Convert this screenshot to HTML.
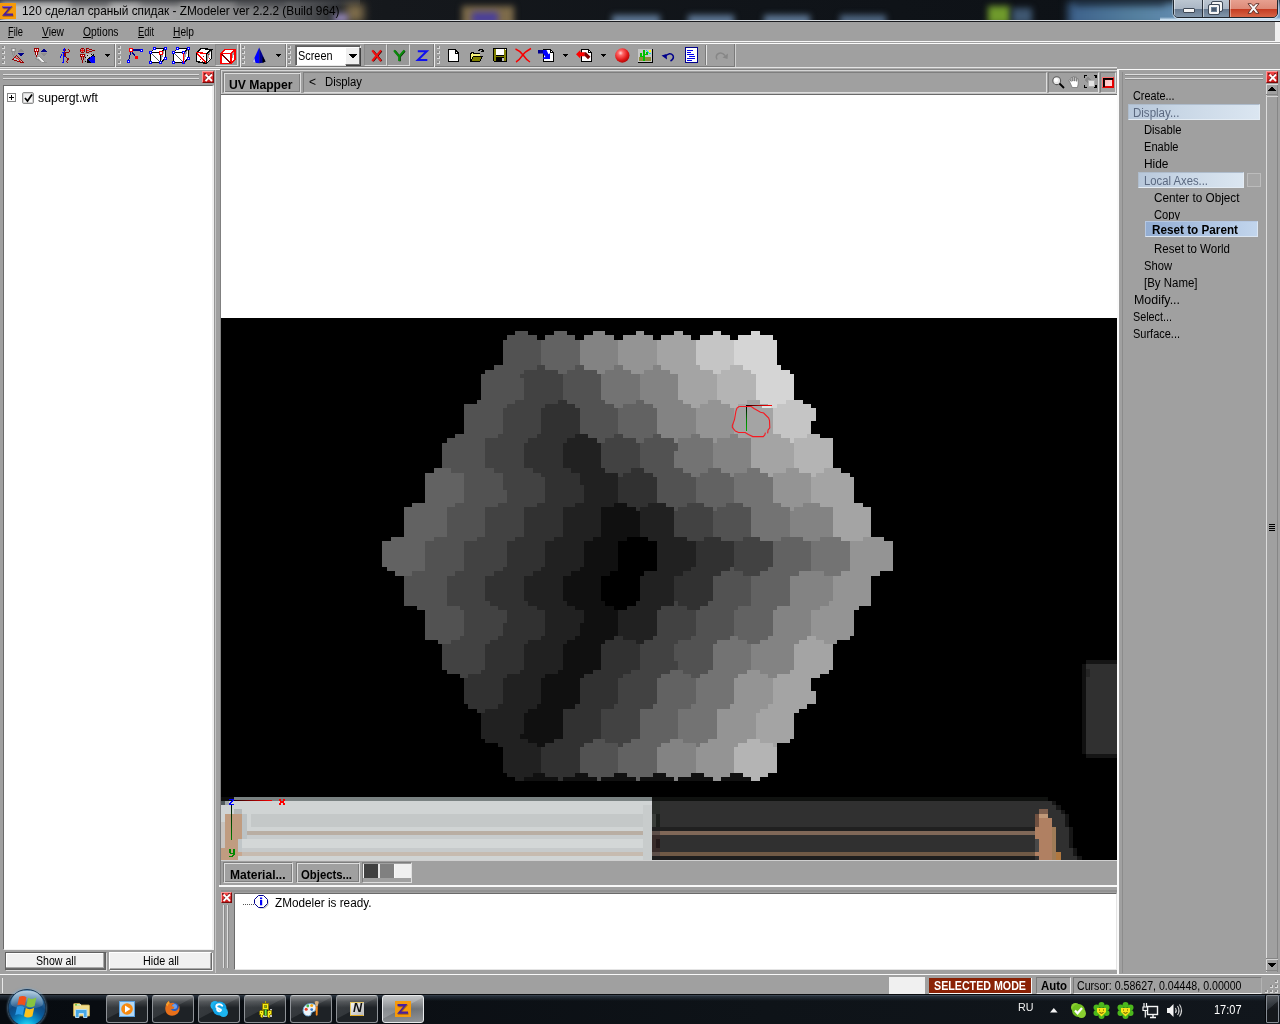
<!DOCTYPE html>
<html><head><meta charset="utf-8"><title>ZModeler</title>
<style>
*{box-sizing:border-box;margin:0;padding:0}
html,body{width:1280px;height:1024px;overflow:hidden;background:#a0a0a0;font-family:"Liberation Sans",sans-serif;font-size:12px;color:#000}
.a{position:absolute}
.t{position:absolute;white-space:nowrap;transform-origin:0 50%}
.t u{text-decoration:underline;text-underline-offset:1px}
svg{position:absolute;overflow:visible}
.sunk{border:1px solid;border-color:#6e6e6e #fff #fff #6e6e6e}
.rais{border:1px solid;border-color:#fff #6e6e6e #6e6e6e #fff}
.etch{border:1px solid;border-color:#7c7c7c #dcdcdc #dcdcdc #7c7c7c}
.w{background:#fff}.d{background:#6e6e6e}.l{background:#d8d8d8}
.dot{position:absolute;width:3px;height:3px;background:#8a8a8a;border:solid #dadada;border-width:0 1px 1px 0}
.tb{position:absolute;width:42px;height:28px;border:1px solid #8e9297;border-top-color:#c4c8cc;border-radius:3px;background:linear-gradient(180deg,rgba(255,255,255,.42) 0,rgba(255,255,255,.14) 22%,rgba(255,255,255,0) 45%),linear-gradient(152deg,#3b3f43 0,#33373b 47%,#1e2226 49%,#1e2226 100%)}
.tb.act{border-color:#e8eaec;background:linear-gradient(180deg,rgba(255,255,255,.5) 0,rgba(255,255,255,.1) 40%,rgba(255,255,255,0) 50%,rgba(255,255,255,.18) 100%),linear-gradient(152deg,#8e9296 0,#878b8f 47%,#6c7074 49%,#787c80 100%)}
</style></head><body>
<!-- ================= TITLE BAR ================= -->
<div class="a" style="left:0;top:0;width:1280px;height:22px;background:linear-gradient(90deg,#2a2d31 0,#15181c 30%,#101419 60%,#0c1015 100%);overflow:hidden">
  <!-- blurred wallpaper blobs -->
  <div class="a" style="left:0;top:-4px;width:360px;height:30px;background:linear-gradient(90deg,rgba(200,200,200,.95) 0,rgba(190,190,190,.9) 40%,rgba(150,150,152,.75) 75%,rgba(60,62,66,0) 100%);filter:blur(3px)"></div>
  <div class="a" style="left:462px;top:6px;width:52px;height:20px;background:#7d6b4a;filter:blur(3px)"></div>
  <div class="a" style="left:472px;top:12px;width:26px;height:12px;background:#4a3f9a;filter:blur(3px)"></div>
  <div class="a" style="left:612px;top:15px;width:48px;height:10px;background:#5e7896;filter:blur(3px)"></div>
  <div class="a" style="left:688px;top:15px;width:46px;height:10px;background:#5e7896;filter:blur(3px)"></div>
  <div class="a" style="left:764px;top:15px;width:46px;height:10px;background:#5e7896;filter:blur(3px)"></div>
  <div class="a" style="left:840px;top:15px;width:46px;height:10px;background:#4f6783;filter:blur(3px)"></div>
  <div class="a" style="left:988px;top:6px;width:22px;height:18px;background:#6f9a2c;filter:blur(3px)"></div>
  <div class="a" style="left:1012px;top:8px;width:20px;height:16px;background:#3e5670;filter:blur(3px)"></div>
  <div class="a" style="left:1068px;top:2px;width:230px;height:26px;background:linear-gradient(90deg,#3c608a,#55809f 30%,#6a93bb 60%,#7da2c6);filter:blur(4px)"></div>
  <div class="a" style="left:1075px;top:-2px;width:90px;height:9px;background:rgba(20,30,45,.45);filter:blur(3px)"></div>
  <div class="a" style="left:0;top:0;width:360px;height:7px;background:linear-gradient(180deg,rgba(50,52,56,.75) 0,rgba(70,72,76,.35) 45%,rgba(90,90,90,0) 100%)"></div>
  <div class="a" style="left:70px;top:-2px;width:40px;height:9px;background:rgba(60,62,66,.55);filter:blur(3px)"></div>
  <div class="a" style="left:140px;top:-2px;width:40px;height:8px;background:rgba(60,62,66,.5);filter:blur(3px)"></div>
  <div class="a" style="left:236px;top:-2px;width:50px;height:9px;background:rgba(50,52,56,.5);filter:blur(3px)"></div>
  <!-- bottom edge -->
  <div class="a" style="left:346px;top:4px;width:18px;height:18px;background:#8f7a52;filter:blur(4px);opacity:.85"></div>
  <div class="a" style="left:334px;top:14px;width:14px;height:8px;background:#9a8cc0;filter:blur(3px)"></div>
  <div class="a" style="left:0;top:20px;width:1280px;height:1px;background:#d6dade"></div>
  <div class="a" style="left:0;top:21px;width:1280px;height:1px;background:#1a1c20"></div>
  <!-- app icon -->
  <div class="a" style="left:0;top:3px;width:16px;height:16px;background:#f59a0a"></div>
  <svg style="left:0;top:3px" width="16" height="16" viewBox="0 0 16 16"><path d="M3.500 4h9.500l-6.500 7.500h7v2.300h-11l6.500-7.500h-5.500z" fill="#7a4a10" opacity=".55"/><path d="M2.500 3h10l-6.500 7.500h7v2.300h-11l6.500-7.500h-6z" fill="#4a1f9a"/><path d="M3 3.500h8.500" stroke="#8a6ad0" stroke-width=".8"/></svg>
  <span class="t" style="left:21.50px;top:3.74px;font-size:12px;line-height:14px;font-weight:normal;color:#000;transform:scaleX(0.9856)">120 сделал сраный спидак - ZModeler ver 2.2.2 (Build 964)</span>
  <!-- caption buttons -->
  <div class="a" style="left:1160px;top:17px;width:120px;height:4px;background:linear-gradient(180deg,rgba(200,225,245,.0),rgba(208,228,244,.9) 60%,rgba(220,236,248,1))"></div>
  <div class="a" style="left:1173px;top:-4px;width:105px;height:22px;border:1px solid #1e262e;border-radius:5px;box-shadow:0 1px 0 rgba(230,240,250,.75),1px 0 0 rgba(230,240,250,.5),-1px 0 0 rgba(230,240,250,.35);overflow:hidden;background:#55687d">
    <div class="a" style="left:0;top:0;width:28px;height:21px;background:linear-gradient(180deg,#c2ccd6 0,#aab6c4 55%,#66798f 58%,#8599ae 100%);box-shadow:inset 1px 0 0 rgba(255,255,255,.5)"></div>
    <div class="a" style="left:28px;top:0;width:1px;height:21px;background:#2a323c"></div>
    <div class="a" style="left:29px;top:0;width:26px;height:21px;background:linear-gradient(180deg,#c2ccd6 0,#aab6c4 55%,#66798f 58%,#8599ae 100%);box-shadow:inset 1px 0 0 rgba(255,255,255,.5)"></div>
    <div class="a" style="left:55px;top:0;width:1px;height:21px;background:#4a2018"></div>
    <div class="a" style="left:56px;top:0;width:48px;height:21px;background:linear-gradient(180deg,#eaa898 0,#dd8a78 55%,#c43c22 58%,#d9694a 100%);box-shadow:inset 1px 0 0 rgba(255,255,255,.4)"></div>
  </div>
  <div class="a" style="left:1183px;top:8px;width:12px;height:5px;background:#f4f4f4;border:1px solid #3e4856;border-radius:1px"></div>
  <div class="a" style="left:1212px;top:2px;width:10px;height:9px;border:2px solid #f4f4f4;outline:1px solid #3e4856;border-radius:1px;background:#8fa0b2"></div>
  <div class="a" style="left:1209px;top:5px;width:10px;height:9px;border:2px solid #f4f4f4;outline:1px solid #3e4856;background:#6a7e94;border-radius:1px"></div>
  <div class="a" style="left:1212px;top:8px;width:4px;height:3px;background:#48586c"></div>
  <svg style="left:1247px;top:3px" width="13" height="11" viewBox="0 0 13 11"><path d="M1 0.700h3.300L6.500 3.200 8.700 0.700H12L8.400 5.200 12 10.300H8.700L6.500 7.300 4.300 10.300H1L4.600 5.200z" fill="#f6f6f6" stroke="#5a2a22" stroke-width=".9"/></svg>
</div>
<!-- ================= MENU BAR ================= -->
<div class="a" style="left:0;top:22px;width:1280px;height:20px;background:#a0a0a0"></div>
<span class="t" style="left:8.00px;top:24.74px;font-size:12px;line-height:14px;font-weight:normal;color:#000;transform:scaleX(0.7758)"><u>F</u>ile</span>
<span class="t" style="left:42.00px;top:24.74px;font-size:12px;line-height:14px;font-weight:normal;color:#000;transform:scaleX(0.8529)"><u>V</u>iew</span>
<span class="t" style="left:83.00px;top:24.74px;font-size:12px;line-height:14px;font-weight:normal;color:#000;transform:scaleX(0.8584)"><u>O</u>ptions</span>
<span class="t" style="left:137.50px;top:24.74px;font-size:12px;line-height:14px;font-weight:normal;color:#000;transform:scaleX(0.7738)"><u>E</u>dit</span>
<span class="t" style="left:173.00px;top:24.74px;font-size:12px;line-height:14px;font-weight:normal;color:#000;transform:scaleX(0.8509)"><u>H</u>elp</span>
<div class="a" style="left:0;top:41px;width:1280px;height:1px;background:#f6f6f6"></div>
<div class="a" style="left:1275px;top:22px;width:5px;height:19px;background:#f0f0f0"></div>
<!-- ================= TOOLBAR ================= -->
<div class="a" style="left:0;top:43px;width:1280px;height:1px;background:#fafafa"></div>
<div class="a" style="left:0;top:66px;width:735px;height:1px;background:#7a7a7a"></div>
<div class="a" style="left:0;top:67px;width:1117px;height:1px;background:#e4e4e4"></div><div class="a" style="left:0;top:68px;width:1117px;height:1px;background:#aaaaaa"></div>
<!-- group separators: dark then white -->
<div class="a" style="left:114px;top:44px;width:1px;height:22px;background:#7a7a7a"></div><div class="a" style="left:115px;top:44px;width:1px;height:23px;background:#ececec"></div>
<div class="a" style="left:239px;top:44px;width:1px;height:22px;background:#7a7a7a"></div><div class="a" style="left:240px;top:44px;width:1px;height:23px;background:#ececec"></div>
<div class="a" style="left:285px;top:44px;width:1px;height:22px;background:#7a7a7a"></div><div class="a" style="left:286px;top:44px;width:1px;height:23px;background:#ececec"></div>
<div class="a" style="left:433px;top:44px;width:1px;height:22px;background:#7a7a7a"></div><div class="a" style="left:434px;top:44px;width:1px;height:23px;background:#ececec"></div>
<div class="a" style="left:734px;top:44px;width:1px;height:22px;background:#7a7a7a"></div><div class="a" style="left:735px;top:44px;width:1px;height:23px;background:#d0d0d0"></div>
<!-- grips -->
<div class="dot" style="left:2px;top:46px"></div><div class="dot" style="left:2px;top:51px"></div><div class="dot" style="left:2px;top:56px"></div><div class="dot" style="left:2px;top:61px"></div>
<div class="dot" style="left:118px;top:46px"></div><div class="dot" style="left:118px;top:51px"></div><div class="dot" style="left:118px;top:56px"></div><div class="dot" style="left:118px;top:61px"></div>
<div class="dot" style="left:242px;top:46px"></div><div class="dot" style="left:242px;top:51px"></div><div class="dot" style="left:242px;top:56px"></div><div class="dot" style="left:242px;top:61px"></div>
<div class="dot" style="left:288px;top:46px"></div><div class="dot" style="left:288px;top:51px"></div><div class="dot" style="left:288px;top:56px"></div><div class="dot" style="left:288px;top:61px"></div>
<div class="dot" style="left:437px;top:46px"></div><div class="dot" style="left:437px;top:51px"></div><div class="dot" style="left:437px;top:56px"></div><div class="dot" style="left:437px;top:61px"></div>

<!-- group 1 icons -->
<svg style="left:11px;top:48px" width="14" height="16" viewBox="0 0 14 16" shape-rendering="crispEdges"><path fill="#aec6c6" d="M3 9h2v1h-2zM2 10h4v1h-4zM3 11h4v1h-4zM6 12h3v1h-3zM5 11h3v1h-3zM9 13h2v1h-2z"/><path fill="#8e8e8e" d="M0 0h5v1h-5zM0 3h5v1h-5zM0 1h1v1h-1zM0 2h1v1h-1zM4 1h1v1h-1zM4 2h1v1h-1zM1 4h1v1h-1zM1 5h1v1h-1zM1 6h1v1h-1zM3 4h1v1h-1zM3 5h1v1h-1zM3 6h1v1h-1zM2 7h1v1h-1zM2 8h1v1h-1zM9 1h2v1h-2zM8 2h4v1h-4zM7 3h6v1h-6z"/><path fill="#f4f4f4" d="M2 1h1v1h-1zM2 2h1v1h-1z"/><path fill="#c8c8c8" d="M1 1h1v1h-1zM1 2h1v1h-1zM3 1h1v1h-1zM3 2h1v1h-1z"/><path fill="#000088" d="M7 5h6v1h-6zM8 6h4v1h-4zM9 7h2v1h-2z"/><path fill="#960000" d="M5 7h1v1h-1zM4 8h1v1h-1zM3 9h1v1h-1zM2 10h1v1h-1zM1 11h2v1h-2zM6 8h1v1h-1zM7 9h1v1h-1zM8 10h1v1h-1zM9 11h1v1h-1zM10 12h1v1h-1zM11 13h1v1h-1zM12 14h1v1h-1zM3 12h3v1h-3zM6 13h3v1h-3zM9 14h4v1h-4z"/><path fill="#ff1010" d="M4 9h1v1h-1zM5 10h1v1h-1zM6 10h1v1h-1zM7 11h1v1h-1zM8 12h1v1h-1zM9 13h1v1h-1z"/></svg>
<svg style="left:34px;top:48px" width="14" height="16" viewBox="0 0 14 16" shape-rendering="crispEdges"><path fill="#960000" d="M0 0h5v1h-5zM0 1h1v1h-1zM0 2h1v1h-1zM0 3h1v1h-1zM4 1h1v1h-1zM4 2h1v1h-1zM4 3h1v1h-1zM1 4h1v1h-1zM1 5h1v1h-1zM1 6h1v1h-1zM3 4h1v1h-1zM3 5h1v1h-1zM3 6h1v1h-1zM2 7h1v1h-1zM2 8h1v1h-1zM2 9h1v1h-1zM1 3h1v1h-1zM3 3h1v1h-1z"/><path fill="#f4f4f4" d="M1 1h1v1h-1zM1 2h1v1h-1zM3 1h1v1h-1zM3 2h1v1h-1zM2 4h1v1h-1zM2 5h1v1h-1zM2 6h1v1h-1z"/><path fill="#ff1010" d="M2 1h1v1h-1zM2 2h1v1h-1zM2 3h1v1h-1z"/><path fill="#000088" d="M9 1h2v1h-2zM8 2h4v1h-4zM7 3h6v1h-6z"/><path fill="#8e8e8e" d="M7 5h6v1h-6zM8 6h4v1h-4zM9 7h2v1h-2z"/><path fill="#909090" d="M5 8h1v1h-1zM6 9h1v1h-1zM7 10h1v1h-1zM8 11h1v1h-1zM9 12h1v1h-1zM10 13h1v1h-1zM11 14h1v1h-1zM1 10h2v1h-2zM2 11h3v1h-3zM4 12h3v1h-3zM6 13h3v1h-3zM8 14h5v1h-5zM2 9h1v1h-1z"/><path fill="#f0f0f0" d="M4 9h1v1h-1zM5 10h1v1h-1zM6 11h1v1h-1zM7 12h1v1h-1zM8 13h1v1h-1zM5 9h1v1h-1zM6 10h1v1h-1zM7 11h1v1h-1zM8 12h1v1h-1zM9 13h1v1h-1z"/><path fill="#c4c4c4" d="M3 10h1v1h-1zM4 10h1v1h-1zM5 11h1v1h-1zM6 12h1v1h-1zM7 13h1v1h-1zM3 9h1v1h-1z"/></svg>
<svg style="left:60px;top:48px" width="11" height="16" viewBox="0 0 11 16" shape-rendering="crispEdges"><path fill="#0000ff" d="M4 0h1v1h-1zM3 1h2v1h-2zM3 2h2v1h-2zM2 4h3v1h-3zM3 5h2v1h-2zM3 6h2v1h-2zM3 7h2v1h-2zM3 8h2v1h-2zM1 6h1v1h-1zM1 7h1v1h-1zM0 8h1v1h-1zM0 9h1v1h-1zM3 9h1v1h-1zM3 10h1v1h-1zM3 11h1v1h-1zM3 12h1v1h-1zM3 13h1v1h-1zM2 14h2v1h-2z"/><path fill="#960000" d="M5 1h1v1h-1zM5 2h1v1h-1zM4 3h1v1h-1zM5 4h4v1h-4zM8 1h1v1h-1zM9 2h1v1h-1zM9 3h1v1h-1zM4 5h2v1h-2zM4 6h2v1h-2zM4 7h2v1h-2zM5 8h1v1h-1zM6 9h1v1h-1zM7 10h2v1h-2zM7 11h2v1h-2zM7 12h1v1h-1zM6 13h1v1h-1zM7 14h1v1h-1z"/></svg>
<svg style="left:80px;top:48px" width="16" height="16" viewBox="0 0 16 16" shape-rendering="crispEdges"><path fill="#c4c4c4" d="M6 6h8v1h-8zM6 7h7v1h-7zM6 8h6v1h-6zM6 9h4v1h-4zM6 10h3v1h-3zM6 11h2v1h-2zM6 12h1v1h-1z"/><path fill="#960000" d="M1 0h3v1h-3zM1 4h3v1h-3zM0 1h1v1h-1zM0 2h1v1h-1zM0 3h1v1h-1zM4 1h1v1h-1zM4 2h1v1h-1zM4 3h1v1h-1zM6 0h3v1h-3zM6 4h3v1h-3zM6 1h1v1h-1zM6 2h1v1h-1zM6 3h1v1h-1zM9 1h3v1h-3zM9 3h3v1h-3zM12 2h3v1h-3zM0 6h5v1h-5zM0 7h1v1h-1zM0 8h1v1h-1zM4 7h1v1h-1zM4 8h1v1h-1zM1 9h1v1h-1zM1 10h1v1h-1zM1 11h1v1h-1zM3 9h1v1h-1zM3 10h1v1h-1zM3 11h1v1h-1zM2 12h1v1h-1zM2 13h1v1h-1zM2 14h1v1h-1zM1 8h1v1h-1zM3 8h1v1h-1z"/><path fill="#ff1010" d="M1 2h3v1h-3zM2 1h1v1h-1zM2 3h1v1h-1zM7 2h2v1h-2zM2 7h1v1h-1zM2 8h1v1h-1z"/><path fill="#f4f4f4" d="M1 7h1v1h-1zM3 7h1v1h-1z"/><path fill="#0000ff" d="M12 8h2v1h-2zM10 9h5v1h-5zM8 10h7v1h-7zM8 11h7v1h-7zM9 12h6v1h-6zM10 13h5v1h-5zM11 14h4v1h-4z"/><path fill="#000000" d="M12 7h2v1h-2zM11 8h1v1h-1zM14 8h1v1h-1zM9 9h1v1h-1zM7 7h1v1h-1zM11 6h1v1h-1zM13 6h1v1h-1zM5 9h1v1h-1zM5 13h1v1h-1zM7 11h1v1h-1zM7 12h2v1h-2zM7 13h3v1h-3zM7 14h4v1h-4zM8 10h2v1h-2z"/></svg>
<svg style="left:105px;top:54px" width="5" height="3" viewBox="0 0 5 3" shape-rendering="crispEdges"><path d="M0 0h5v1h-5zM1 1h3v1h-3zM2 2h1v1h-1z" fill="#000"/></svg>

<!-- group 2 icons -->
<svg style="left:127px;top:48px" width="17" height="16" viewBox="0 0 17 16" shape-rendering="crispEdges">
 <path d="M4 2h10M4 3L1.500 13M4 3l5 6" stroke="#00008c" fill="none" stroke-width="1.100"/>
 <rect x="2.500" y="0.500" width="3" height="3" fill="#fff" stroke="#f00"/><rect x="13" y="1" width="2" height="2" fill="#fff" stroke="#00f"/>
 <rect x="0.500" y="12.500" width="2" height="2" fill="#fff" stroke="#00f"/><rect x="8" y="8" width="3" height="3" fill="#f00"/>
</svg>
<svg style="left:150px;top:48px" width="17" height="16" viewBox="0 0 17 16" shape-rendering="crispEdges">
 <path d="M0.500 4.500h10v10h-10zM0.500 4.500l4-4h11l-5 4M15.500 0.500v10l-5 4" fill="#fff" stroke="#000" stroke-width="1.300"/><path d="M1 5l9 9" stroke="#555"/><path d="M4.500 0.500v0M15.500 10.500" stroke="#888"/>
 <g fill="#fff" stroke="#00f"><rect x="3.500" y="-0.500" width="2" height="2"/><rect x="14" y="-0.500" width="2" height="2"/><rect x="-0.500" y="3.500" width="2" height="2"/><rect x="-0.500" y="13.500" width="2" height="2"/><rect x="9.500" y="13.500" width="2" height="2"/><rect x="14" y="9.500" width="2" height="2"/></g>
 <rect x="9.500" y="3.500" width="3" height="3" fill="#fff" stroke="#f00"/>
</svg>
<svg style="left:173px;top:48px" width="17" height="16" viewBox="0 0 17 16" shape-rendering="crispEdges">
 <path d="M0.500 4.500h10v10h-10zM0.500 4.500l4-4h11l-5 4M15.500 0.500v10l-5 4" fill="#fff" stroke="#000" stroke-width="1.300"/><path d="M1 5l9 9" stroke="#555"/>
 <g fill="#fff" stroke="#00f"><rect x="3.500" y="-0.500" width="2" height="2"/><rect x="14" y="-0.500" width="2" height="2"/><rect x="-0.500" y="3.500" width="2" height="2"/><rect x="-0.500" y="13.500" width="2" height="2"/><rect x="9.500" y="13.500" width="2" height="2"/><rect x="14" y="9.500" width="2" height="2"/><rect x="9.500" y="3.500" width="2" height="2"/></g>
 <path d="M10.500 4.500v10.500" stroke="#f00" stroke-width="1.500"/>
</svg>
<svg style="left:196px;top:48px" width="17" height="16" viewBox="0 0 17 16" shape-rendering="crispEdges">
 <path d="M0.500 4.500l10 1v10l-10-2zM0.500 4.500l5-4 10 1-5 4M15.500 1.500v9l-5 5" fill="#fff" stroke="#000" stroke-width="1.300"/>
 <path d="M0.500 4.500l10 11M0.500 4.500l10 1" stroke="#f00" stroke-width="1.300"/><path d="M4 11h1M7 8h1M6 13h1M12 6h1M13 10h1" stroke="#c00"/>
</svg>
<!-- pressed button -->
<div class="a" style="left:215px;top:44px;width:23px;height:22px;background:#989898;border:1px solid;border-color:#8a8a8a #d8d8d8 #d8d8d8 #8a8a8a"></div>
<svg style="left:220px;top:49px" width="16" height="15" viewBox="0 0 16 15" shape-rendering="crispEdges">
 <path d="M1 4.500h10v10h-10zM1 4.500l4-4h10l-4 4M15 0.500v10l-4 4" fill="#fff" stroke="#f00" stroke-width="1.500"/><path d="M1.500 5l9 9" stroke="#800000" stroke-width="1.200"/>
</svg>
<!-- group 3 -->
<svg style="left:252px;top:47px" width="14" height="17" viewBox="0 0 14 17">
 <path d="M7.200 0.500L0.700 14.500q3 1.800 6.500 1.800z" fill="#0000ff"/><path d="M7.200 0.500v15.800q3.500 0 6.300-1.800z" fill="#000090"/>
 <path d="M10.500 9l3 5.500q-1.500 1-3 1.400z" fill="#000"/><path d="M0.700 14.500l1.600-3.500 1.200 4.700q-1.600-.4-2.800-1.200z" fill="#c8c8d8"/>
</svg>
<svg style="left:276px;top:54px" width="5" height="3" viewBox="0 0 5 3" shape-rendering="crispEdges"><path d="M0 0h5v1h-5zM1 1h3v1h-3zM2 2h1v1h-1z" fill="#000"/></svg>
<!-- group 4: combo + XYZ -->
<div class="a" style="left:295px;top:45px;width:66px;height:21px;background:#fff;border:1px solid;border-color:#6a6a6a #e8e8e8 #e8e8e8 #6a6a6a;box-shadow:inset 1px 1px 0 #5c5c5c"></div>
<span class="t" style="left:298.00px;top:49.24px;font-size:12px;line-height:14px;font-weight:normal;color:#000;transform:scaleX(0.9074)">Screen</span>
<div class="a" style="left:345px;top:47px;width:15px;height:18px;background:#efefef;border:1px solid;border-color:#fff #707070 #707070 #fff;box-shadow:1px 1px 0 #404040"></div>
<svg style="left:349px;top:54px" width="8" height="5" viewBox="0 0 8 5" shape-rendering="crispEdges"><path d="M0 0h8L4 4.500z" fill="#000"/></svg>
<div class="a" style="left:364px;top:44px;width:23px;height:22px;background:#989898;border:1px solid;border-color:#8a8a8a #d8d8d8 #d8d8d8 #8a8a8a"></div>
<div class="a" style="left:387px;top:44px;width:23px;height:22px;background:#989898;border:1px solid;border-color:#8a8a8a #d8d8d8 #d8d8d8 #8a8a8a"></div>
<div class="a" style="left:410px;top:44px;width:23px;height:22px;background:#989898"></div>
<svg style="left:371px;top:50px" width="12" height="12" viewBox="0 0 12 12"><path d="M2 0.800l8.500 10.400M10.500 0.800L2 11.200" stroke="#300000" stroke-width="2" fill="none"/><path d="M1.200 0.300l8.800 10.700M10 0.300L1.200 11" stroke="#f01010" stroke-width="2" fill="none"/></svg>
<svg style="left:393px;top:50px" width="13" height="12" viewBox="0 0 13 12"><path d="M1.800 0.800l5 6 5-6M6.800 6.500v4.800" stroke="#002000" stroke-width="2" fill="none"/><path d="M1 0.300l5.200 6.200 5.200-6.200M6.200 6.300v4.800" stroke="#0a8a0a" stroke-width="2.100" fill="none"/></svg>
<svg style="left:417px;top:50px" width="12" height="12" viewBox="0 0 12 12"><path d="M0.800 1.200h9l-9 8.800h9.500" stroke="#1010f0" stroke-width="2" fill="none" stroke-linejoin="miter"/></svg>
<!-- group 5 icons -->
<svg style="left:448px;top:49px" width="11" height="13" viewBox="0 0 11 13" shape-rendering="crispEdges"><path d="M0.500 0.500h6.500l3.500 3.500v8.500h-10z" fill="#fff" stroke="#000"/><path d="M7 1v3h3" fill="none" stroke="#000"/></svg>
<svg style="left:470px;top:48px" width="14" height="14" viewBox="0 0 14 14" shape-rendering="crispEdges">
 <path d="M8 2h1v-1h3v1h1v2M11 3h3" fill="none" stroke="#000"/>
 <path d="M0.500 13.500v-8h1v-1h2v1h6v2" fill="#f4f078" stroke="#000"/><path d="M1 6h9v3h-9z" fill="#f4f078"/><path d="M1 13l2.500-5h9l-2.500 5z" fill="#808000" stroke="#000"/>
</svg>
<svg style="left:493px;top:48px" width="14" height="14" viewBox="0 0 14 14" shape-rendering="crispEdges">
 <path d="M0.500 0.500h13v13h-12l-1-1z" fill="#808000" stroke="#000"/><rect x="3" y="1" width="8" height="6" fill="#fff"/><rect x="3" y="7" width="8" height="1" fill="#000"/><rect x="3" y="9" width="8" height="4.500" fill="#000"/><rect x="9" y="10" width="2" height="3" fill="#c0c0c0"/><rect x="12" y="1" width="1" height="1" fill="#fff"/>
</svg>
<svg style="left:515px;top:48px" width="17" height="15" viewBox="0 0 17 15"><path d="M0.500 1q5 2 8 6.500t6.500 6.500M16 0.500q-6 3-9 7.500t-6 6" fill="none" stroke="#f80000" stroke-width="1.400"/></svg>
<svg style="left:538px;top:48px" width="17" height="15" viewBox="0 0 17 15">
 <path d="M5.500 1.500h7l3 3v9h-10z" fill="#fff" stroke="#000" shape-rendering="crispEdges"/><path d="M12.500 1.500v3h3" fill="none" stroke="#000" shape-rendering="crispEdges"/>
 <path d="M0 2h5v3.500h-5z" fill="#000090"/><path d="M5 2h3.500l2 4.300 1.500-1v5.700h-7v-1.500l2.500-.5-2.500-3.500z" fill="#0000ff"/>
</svg>
<svg style="left:563px;top:54px" width="5" height="3" viewBox="0 0 5 3" shape-rendering="crispEdges"><path d="M0 0h5v1h-5zM1 1h3v1h-3zM2 2h1v1h-1z" fill="#000"/></svg>
<svg style="left:576px;top:48px" width="17" height="15" viewBox="0 0 17 15">
 <path d="M5.500 1.500h7l3 3v9h-10z" fill="#fff" stroke="#000" shape-rendering="crispEdges"/><path d="M12.500 1.500v3h3" fill="none" stroke="#000" shape-rendering="crispEdges"/>
 <path d="M0 6.300l4.300-4.300v2.300h4.500v4h-4.500v2.300z" fill="#ff0000"/><path d="M8.500 4.300h1.500l4.500 4.500-2.500 2.500-3.500-3.500z" fill="#800000"/>
</svg>
<svg style="left:601px;top:54px" width="5" height="3" viewBox="0 0 5 3" shape-rendering="crispEdges"><path d="M0 0h5v1h-5zM1 1h3v1h-3zM2 2h1v1h-1z" fill="#000"/></svg>
<svg style="left:615px;top:48px" width="15" height="15" viewBox="0 0 15 15"><defs><radialGradient id="rb" cx=".38" cy=".33" r=".7"><stop offset="0" stop-color="#ffd8d8"/><stop offset=".25" stop-color="#f66"/><stop offset=".7" stop-color="#e01818"/><stop offset="1" stop-color="#b00808"/></radialGradient></defs><circle cx="7.300" cy="7.500" r="7.200" fill="url(#rb)"/></svg>
<svg style="left:638px;top:49px" width="15" height="14" viewBox="0 0 15 14" shape-rendering="crispEdges">
 <rect x="0" y="0" width="14" height="13" fill="#c6c6c6"/><path d="M0 13h15v1h-15zM14 0h1v14h-1z" fill="#000"/><rect x="1" y="8" width="12" height="4" fill="#8c8c3c"/>
 <path d="M8 1h1v1h-1zM9 2h1v1h-1zM10 3h1v1h-1zM11 4h2v1h-2zM8 3h1v1h-1zM9 4h1v1h-1z" fill="#00e0e0"/><rect x="11" y="1" width="2" height="2" fill="#ff0"/>
 <path d="M5 1h2v11h-2zM2 4h2v4h-2zM2 7h3v1h-3zM8 3h2v3h-2zM7 5h2v1h-2z" fill="#00c000"/>
</svg>
<svg style="left:661px;top:52px" width="14" height="10" viewBox="0 0 14 10"><path d="M4 4.500q5-5 8-1 1.500 3-2.500 5.500" fill="none" stroke="#00008a" stroke-width="1.500"/><path d="M0.500 3.500l5 -1.500 0.500 5.500z" fill="#00008a"/></svg>
<svg style="left:685px;top:47px" width="14" height="16" viewBox="0 0 14 16" shape-rendering="crispEdges"><rect x="0.500" y="0.500" width="12" height="15" fill="#fff" stroke="#00008a"/><path d="M2 3h6v1h-6zM2 5h4v1h-4zM2 7h7v1h-7zM4 9h6v1h-6zM2 11h8v1h-8zM2 13h5v1h-5z" fill="#0000f0"/></svg>
<div class="a" style="left:705px;top:45px;width:1px;height:20px;background:#7a7a7a"></div><div class="a" style="left:706px;top:45px;width:1px;height:20px;background:#e6e6e6"></div>
<svg style="left:715px;top:52px" width="14" height="9" viewBox="0 0 14 9"><path d="M2 7.500q-2-4 1.500-6 3.500-1.500 6.500 2" fill="none" stroke="#878787" stroke-width="1.500"/><path d="M13 1.500l-0.500 5.500-5-1.500z" fill="#878787"/></svg>
<!-- ================= LEFT PANEL ================= -->
<div class="a" style="left:0;top:69px;width:220px;height:1px;background:#fcfcfc"></div>
<!-- grip lines -->
<div class="a" style="left:3px;top:74px;width:196px;height:2px;background:linear-gradient(180deg,#dedede 0 50%,#8a8a8a 50% 100%)"></div>
<div class="a" style="left:3px;top:78px;width:196px;height:2px;background:linear-gradient(180deg,#dedede 0 50%,#8a8a8a 50% 100%)"></div>
<!-- close button -->
<div class="a" style="left:202px;top:71px;width:12px;height:12px;background:linear-gradient(180deg,#f04848,#c81818);border:1px solid;border-color:#ff9a9a #7a0a0a #7a0a0a #ff9a9a"></div>
<svg style="left:203.5px;top:72.5px" width="9" height="9" viewBox="0 0 9 9"><path d="M0.500 0.500l5 5M7.500 0.500l-6.500 6.500" stroke="#000" stroke-width="1.300" stroke-dasharray="1.400 1.400"/><path d="M1.500 1.500l6.500 6.500M8 1.500l-6.500 6.500" stroke="#fff" stroke-width="1.800"/></svg>
<!-- tree list -->
<div class="a" style="left:3px;top:85px;width:211px;height:865px;background:#fff;border:1px solid;border-color:#6a6a6a #f0f0f0 #f0f0f0 #6a6a6a;border-right-width:2px"></div>
<div class="a" style="left:214px;top:70px;width:1px;height:880px;background:#969696"></div>
<div class="a" style="left:7px;top:93px;width:9px;height:9px;border:1px solid #848484;background:#fff"></div>
<div class="a" style="left:9px;top:97px;width:5px;height:1px;background:#000"></div><div class="a" style="left:11px;top:95px;width:1px;height:5px;background:#000"></div>
<div class="a" style="left:22px;top:92px;width:12px;height:12px;border:1px solid #8e8f8f;border-radius:2px;background:linear-gradient(135deg,#e8e8e8,#fff);box-shadow:inset 0 0 0 1px #d4d4d4"></div>
<svg style="left:24px;top:94px" width="9" height="9" viewBox="0 0 9 9"><path d="M1 4l2.500 3L8 0.500" fill="none" stroke="#000" stroke-width="1.700"/></svg>
<span class="t" style="left:38.00px;top:91.24px;font-size:12px;line-height:14px;font-weight:normal;color:#000;transform:scaleX(1.0223)">supergt.wft</span>
<!-- buttons -->
<div class="a" style="left:5px;top:952px;width:101px;height:18px;background:#f0f0f0;border:1px solid #606060;box-shadow:inset -1px -1px 0 #6a6a6a,inset -2px -2px 0 #a8a8a8,inset 1px 1px 0 #fff,1px 1px 0 #d8d8d8"></div>
<div class="a" style="left:109px;top:952px;width:103px;height:18px;background:#f0f0f0;border:1px solid;border-color:#fff #686868 #686868 #fff;box-shadow:inset -1px -1px 0 #a8a8a8,1px 1px 0 #f4f4f4"></div>
<span class="t" style="left:35.50px;top:954.24px;font-size:12px;line-height:14px;font-weight:normal;color:#000;transform:scaleX(0.8819)">Show all</span>
<span class="t" style="left:143.00px;top:954.24px;font-size:12px;line-height:14px;font-weight:normal;color:#000;transform:scaleX(0.8996)">Hide all</span>
<!-- splitter between left and main -->
<div class="a" style="left:215px;top:70px;width:1px;height:903px;background:#c6c6c6"></div>
<div class="a" style="left:220px;top:70px;width:1px;height:815px;background:#808080"></div>
<!-- ================= MAIN VIEW FRAME ================= -->
<div class="a" style="left:220px;top:69px;width:897px;height:1px;background:#858585"></div>
<div class="a" style="left:221px;top:70px;width:896px;height:1px;background:#d6d6d6"></div>
<div class="a" style="left:221px;top:70px;width:1px;height:24px;background:#d6d6d6"></div>
<div class="a" style="left:222px;top:93px;width:895px;height:1px;background:#c4c4c4"></div>
<!-- UV Mapper button -->
<div class="a" style="left:223px;top:72px;width:78px;height:21px;border:1px solid;border-color:#7e7e7e #dedede #dedede #7e7e7e;box-shadow:inset 1px 1px 0 #dedede,inset -1px -1px 0 #7e7e7e"></div>
<span class="t" style="left:229.00px;top:77.74px;font-size:12px;line-height:14px;font-weight:bold;color:#000;transform:scaleX(1.0131)">UV Mapper</span>
<!-- Display box -->
<div class="a" style="left:303px;top:72px;width:744px;height:21px;border:1px solid;border-color:#7e7e7e #dedede #dedede #7e7e7e"></div>
<span class="t" style="left:309.00px;top:74.74px;font-size:12px;line-height:14px;font-weight:normal;color:#000;transform:scaleX(0.9989)">&lt;</span>
<span class="t" style="left:324.50px;top:74.74px;font-size:12px;line-height:14px;font-weight:normal;color:#000;transform:scaleX(0.9404)">Display</span>
<!-- icon boxes -->
<div class="a" style="left:1048px;top:72px;width:51px;height:21px;border:1px solid;border-color:#7e7e7e #dedede #dedede #7e7e7e"></div>
<div class="a" style="left:1100px;top:72px;width:16px;height:21px;border:1px solid;border-color:#7e7e7e #dedede #dedede #7e7e7e"></div>
<!-- magnifier -->
<svg style="left:1052px;top:76px" width="13" height="13" viewBox="0 0 13 13"><circle cx="4.700" cy="4.700" r="3.900" fill="#e8e8e8" stroke="#5a5a5a" stroke-width="1.100"/><circle cx="4" cy="4" r="2" fill="#fff"/><path d="M7.500 7.500l4.500 4.500" stroke="#000" stroke-width="1.800"/></svg>
<!-- hand -->
<svg style="left:1068px;top:76px" width="12" height="12" viewBox="0 0 12 12"><path d="M2 6.500L0.800 4.500 2 3.800 3.200 5.500V1.500h1.400V5h.5V.6h1.400V5h.5V1.200h1.400V5.200h.5V2.800h1.300V8L9.400 11.500H4.200z" fill="#fff" stroke="#6a6a6a" stroke-width=".7"/></svg>
<!-- zoom-to-selection -->
<svg style="left:1084px;top:75px" width="13" height="13" viewBox="0 0 13 13" shape-rendering="crispEdges"><path d="M0.500 3V0.500H3M9.500 0.500H12v2.500M12 10v2.500H9.500M3 12.500H0.500V10" fill="none" stroke="#000" stroke-width="1.300"/><circle cx="4" cy="5" r="2.600" fill="#8a8a8a"/><rect x="4.500" y="5.500" width="6" height="5.500" fill="#e4e4e4" stroke="#b0b0b0"/></svg>
<!-- red square -->
<div class="a" style="left:1102px;top:77px;width:12px;height:11px;border:1px solid;border-color:#ff7070 #e00000 #e00000 #ff7070;background:linear-gradient(135deg,#ffb0b0,#ffe4e4);box-shadow:inset 1px 1px 0 #000,inset 2px 2px 0 #200000,inset -1px -1px 0 #e80000"></div>
<!-- viewport -->
<div class="a" style="left:221px;top:94px;width:896px;height:1px;background:#6a6a6a"></div>
<div class="a" style="left:221px;top:95px;width:896px;height:223px;background:#fff"></div>
<div class="a" style="left:221px;top:318px;width:896px;height:542px;background:#000"></div>
<!-- hex texture -->
<svg style="left:0;top:0" width="1280" height="1024" viewBox="0 0 1280 1024" shape-rendering="crispEdges">
<path fill="#101010" d="M614 503h13v4h-13zM601 507h35v4h-35zM601 511h39v4h-39zM601 515h39v5h-39zM601 520h39v4h-39zM601 524h39v4h-39zM601 528h39v5h-39zM601 533h39v4h-39zM593 537h34v4h-34zM584 541h34v5h-34zM584 546h34v4h-34zM584 550h34v4h-34zM584 554h34v4h-34zM584 558h34v5h-34zM584 563h34v4h-34zM580 567h38v4h-38zM571 571h39v5h-39zM563 576h38v4h-38zM563 580h38v4h-38zM563 584h38v4h-38zM563 588h38v5h-38zM563 593h38v4h-38zM563 597h38v4h-38zM567 601h38v5h-38zM575 606h39v4h-39zM584 610h34v4h-34zM584 614h34v4h-34zM584 618h34v5h-34zM580 623h38v4h-38zM580 627h38v4h-38zM580 631h38v5h-38zM575 636h39v4h-39zM567 640h38v4h-38zM563 644h38v4h-38zM563 648h38v5h-38zM563 653h38v4h-38zM563 657h38v4h-38zM563 661h38v5h-38zM563 666h38v4h-38zM558 670h35v4h-35zM545 674h39v4h-39zM541 678h39v5h-39zM541 683h39v4h-39zM541 687h39v4h-39zM541 691h39v5h-39zM541 696h39v4h-39zM541 700h39v4h-39zM537 704h38v5h-38zM528 709h35v4h-35zM524 713h39v4h-39zM524 717h39v4h-39zM524 721h39v5h-39zM524 726h39v4h-39zM524 730h39v4h-39zM520 734h43v5h-43zM528 739h26v4h-26zM537 743h8v4h-8zM533 773h12v4h-12zM575 773h13v4h-13zM614 773h13v4h-13zM653 773h13v4h-13zM691 773h13v4h-13zM730 773h13v4h-13zM524 777h34v4h-34zM563 777h34v4h-34zM601 777h35v4h-35zM640 777h34v4h-34zM678 777h35v4h-35zM721 777h30v4h-30z"/>
<path fill="#212121" d="M575 434h13v4h-13zM567 438h30v5h-30zM563 443h38v4h-38zM563 447h38v4h-38zM563 451h38v4h-38zM563 455h38v5h-38zM563 460h38v4h-38zM563 464h38v4h-38zM571 468h34v5h-34zM580 473h38v4h-38zM580 477h38v4h-38zM580 481h38v4h-38zM584 485h34v5h-34zM584 490h34v4h-34zM584 494h34v4h-34zM584 498h34v5h-34zM575 503h39v4h-39zM648 503h18v4h-18zM563 507h38v4h-38zM640 507h34v4h-34zM563 511h38v4h-38zM640 511h34v4h-34zM563 515h38v5h-38zM640 515h34v5h-34zM563 520h38v4h-38zM640 520h34v4h-34zM563 524h38v4h-38zM640 524h34v4h-34zM563 528h38v5h-38zM640 528h34v5h-34zM563 533h38v4h-38zM640 533h34v4h-34zM554 537h39v4h-39zM648 537h39v4h-39zM545 541h39v5h-39zM657 541h39v5h-39zM545 546h39v4h-39zM657 546h39v4h-39zM545 550h39v4h-39zM657 550h39v4h-39zM545 554h39v4h-39zM657 554h39v4h-39zM545 558h39v5h-39zM657 558h39v5h-39zM545 563h39v4h-39zM657 563h39v4h-39zM541 567h39v4h-39zM657 567h34v4h-34zM533 571h38v5h-38zM644 571h39v5h-39zM524 576h39v4h-39zM640 576h34v4h-34zM524 580h39v4h-39zM640 580h34v4h-34zM524 584h39v4h-39zM640 584h34v4h-34zM524 588h39v5h-39zM640 588h34v5h-34zM524 593h39v4h-39zM640 593h34v4h-34zM524 597h39v4h-39zM640 597h34v4h-34zM528 601h39v5h-39zM636 601h38v5h-38zM537 606h38v4h-38zM627 606h34v4h-34zM545 610h39v4h-39zM618 610h39v4h-39zM545 614h39v4h-39zM618 614h39v4h-39zM545 618h39v5h-39zM618 618h39v5h-39zM545 623h35v4h-35zM618 623h39v4h-39zM545 627h35v4h-35zM618 627h39v4h-39zM545 631h35v5h-35zM618 631h39v5h-39zM541 636h34v4h-34zM623 636h30v4h-30zM528 640h39v4h-39zM636 640h8v4h-8zM524 644h39v4h-39zM524 648h39v5h-39zM524 653h39v4h-39zM524 657h39v4h-39zM524 661h39v5h-39zM524 666h39v4h-39zM520 670h38v4h-38zM507 674h38v4h-38zM503 678h38v5h-38zM503 683h38v4h-38zM503 687h38v4h-38zM503 691h38v5h-38zM503 696h38v4h-38zM503 700h38v4h-38zM498 704h39v5h-39zM485 709h43v4h-43zM481 713h43v4h-43zM481 717h43v4h-43zM481 721h43v5h-43zM481 726h43v4h-43zM481 730h43v4h-43zM481 734h39v5h-39zM485 739h43v4h-43zM498 743h39v4h-39zM503 747h38v4h-38zM503 751h38v5h-38zM503 756h38v4h-38zM503 760h38v4h-38zM503 764h38v5h-38zM503 769h38v4h-38zM507 773h26v4h-26zM515 777h9v4h-9z"/>
<path fill="#313131" d="M558 400h9v4h-9zM545 404h30v4h-30zM541 408h39v5h-39zM541 413h39v4h-39zM541 417h39v4h-39zM541 421h39v4h-39zM541 425h39v5h-39zM541 430h39v4h-39zM537 434h38v4h-38zM528 438h39v5h-39zM524 443h39v4h-39zM524 447h39v4h-39zM524 451h39v4h-39zM524 455h39v5h-39zM524 460h39v4h-39zM524 464h39v4h-39zM533 468h38v5h-38zM631 468h13v5h-13zM541 473h39v4h-39zM623 473h30v4h-30zM545 477h35v4h-35zM618 477h39v4h-39zM545 481h35v4h-35zM618 481h39v4h-39zM545 485h39v5h-39zM618 485h39v5h-39zM545 490h39v4h-39zM618 490h39v4h-39zM545 494h39v4h-39zM618 494h39v4h-39zM545 498h39v5h-39zM618 498h39v5h-39zM537 503h38v4h-38zM627 503h21v4h-21zM524 507h39v4h-39zM636 507h4v4h-4zM524 511h39v4h-39zM524 515h39v5h-39zM524 520h39v4h-39zM524 524h39v4h-39zM524 528h39v5h-39zM524 533h39v4h-39zM515 537h39v4h-39zM704 537h17v4h-17zM507 541h38v5h-38zM696 541h38v5h-38zM507 546h38v4h-38zM696 546h38v4h-38zM507 550h38v4h-38zM696 550h38v4h-38zM507 554h38v4h-38zM696 554h38v4h-38zM507 558h38v5h-38zM696 558h38v5h-38zM507 563h38v4h-38zM696 563h38v4h-38zM503 567h38v4h-38zM691 567h39v4h-39zM494 571h39v5h-39zM683 571h38v5h-38zM485 576h39v4h-39zM674 576h39v4h-39zM485 580h39v4h-39zM674 580h39v4h-39zM485 584h39v4h-39zM674 584h39v4h-39zM485 588h39v5h-39zM674 588h39v5h-39zM485 593h39v4h-39zM674 593h39v4h-39zM485 597h39v4h-39zM674 597h39v4h-39zM490 601h38v5h-38zM678 601h30v5h-30zM498 606h39v4h-39zM687 606h13v4h-13zM507 610h38v4h-38zM507 614h38v4h-38zM507 618h38v5h-38zM503 623h42v4h-42zM503 627h42v4h-42zM503 631h42v5h-42zM498 636h43v4h-43zM614 636h9v4h-9zM490 640h38v4h-38zM605 640h31v4h-31zM485 644h39v4h-39zM601 644h39v4h-39zM485 648h39v5h-39zM601 648h39v5h-39zM485 653h39v4h-39zM601 653h39v4h-39zM485 657h39v4h-39zM601 657h39v4h-39zM485 661h39v5h-39zM601 661h39v5h-39zM485 666h39v4h-39zM601 666h39v4h-39zM481 670h39v4h-39zM593 670h38v4h-38zM468 674h39v4h-39zM584 674h39v4h-39zM464 678h39v5h-39zM580 678h38v5h-38zM464 683h39v4h-39zM580 683h38v4h-38zM464 687h39v4h-39zM580 687h38v4h-38zM464 691h39v5h-39zM580 691h38v5h-38zM464 696h39v4h-39zM580 696h38v4h-38zM464 700h39v4h-39zM580 700h38v4h-38zM468 704h30v5h-30zM575 704h39v5h-39zM477 709h8v4h-8zM563 709h38v4h-38zM563 713h38v4h-38zM563 717h38v4h-38zM563 721h38v5h-38zM563 726h38v4h-38zM563 730h38v4h-38zM563 734h38v5h-38zM554 739h39v4h-39zM545 743h39v4h-39zM541 747h39v4h-39zM541 751h39v5h-39zM541 756h39v4h-39zM541 760h39v4h-39zM541 764h39v5h-39zM541 769h39v4h-39zM545 773h30v4h-30zM558 777h5v4h-5z"/>
<path fill="#424242" d="M537 365h8v5h-8zM524 370h34v4h-34zM520 374h43v4h-43zM524 378h39v4h-39zM524 382h39v5h-39zM524 387h39v4h-39zM524 391h39v4h-39zM524 395h39v5h-39zM515 400h43v4h-43zM507 404h38v4h-38zM503 408h38v5h-38zM503 413h38v4h-38zM503 417h38v4h-38zM503 421h38v4h-38zM503 425h38v5h-38zM503 430h38v4h-38zM498 434h39v4h-39zM614 434h9v4h-9zM485 438h43v5h-43zM605 438h31v5h-31zM485 443h39v4h-39zM601 443h39v4h-39zM485 447h39v4h-39zM601 447h39v4h-39zM485 451h39v4h-39zM601 451h39v4h-39zM485 455h39v5h-39zM601 455h39v5h-39zM485 460h39v4h-39zM601 460h39v4h-39zM485 464h39v4h-39zM601 464h39v4h-39zM494 468h39v5h-39zM605 468h26v5h-26zM503 473h38v4h-38zM618 473h5v4h-5zM503 477h42v4h-42zM503 481h42v4h-42zM503 485h42v5h-42zM507 490h38v4h-38zM507 494h38v4h-38zM507 498h38v5h-38zM498 503h39v4h-39zM687 503h17v4h-17zM485 507h39v4h-39zM678 507h35v4h-35zM485 511h39v4h-39zM674 511h39v4h-39zM485 515h39v5h-39zM674 515h39v5h-39zM485 520h39v4h-39zM674 520h39v4h-39zM485 524h39v4h-39zM674 524h39v4h-39zM485 528h39v5h-39zM674 528h39v5h-39zM485 533h39v4h-39zM674 533h39v4h-39zM477 537h38v4h-38zM687 537h17v4h-17zM743 537h17v4h-17zM464 541h43v5h-43zM734 541h39v5h-39zM464 546h43v4h-43zM734 546h39v4h-39zM464 550h43v4h-43zM734 550h39v4h-39zM464 554h43v4h-43zM734 554h39v4h-39zM464 558h43v5h-43zM734 558h39v5h-39zM464 563h43v4h-43zM734 563h39v4h-39zM464 567h39v4h-39zM734 567h34v4h-34zM455 571h39v5h-39zM743 571h17v5h-17zM447 576h38v4h-38zM447 580h38v4h-38zM447 584h38v4h-38zM447 588h38v5h-38zM447 593h38v4h-38zM447 597h38v4h-38zM447 601h43v5h-43zM674 601h4v5h-4zM460 606h38v4h-38zM661 606h26v4h-26zM464 610h43v4h-43zM657 610h39v4h-39zM464 614h43v4h-43zM657 614h39v4h-39zM464 618h43v5h-43zM657 618h39v5h-39zM464 623h39v4h-39zM657 623h39v4h-39zM464 627h39v4h-39zM657 627h39v4h-39zM464 631h39v5h-39zM657 631h39v5h-39zM460 636h38v4h-38zM653 636h38v4h-38zM451 640h39v4h-39zM644 640h34v4h-34zM442 644h43v4h-43zM640 644h34v4h-34zM442 648h43v5h-43zM640 648h34v5h-34zM442 653h43v4h-43zM640 653h34v4h-34zM442 657h43v4h-43zM640 657h34v4h-34zM442 661h43v5h-43zM640 661h38v5h-38zM442 666h43v4h-43zM640 666h38v4h-38zM447 670h34v4h-34zM631 670h39v4h-39zM460 674h8v4h-8zM623 674h38v4h-38zM618 678h39v5h-39zM618 683h39v4h-39zM618 687h39v4h-39zM618 691h39v5h-39zM618 696h39v4h-39zM618 700h39v4h-39zM614 704h39v5h-39zM601 709h39v4h-39zM601 713h39v4h-39zM601 717h39v4h-39zM601 721h39v5h-39zM601 726h39v4h-39zM601 730h39v4h-39zM601 734h39v5h-39zM605 739h26v4h-26zM618 743h5v4h-5z"/>
<path fill="#525252" d="M515 331h13v4h-13zM507 335h30v5h-30zM503 340h38v4h-38zM503 344h38v4h-38zM503 348h38v4h-38zM503 352h38v5h-38zM503 357h38v4h-38zM503 361h38v4h-38zM494 365h43v5h-43zM575 365h9v5h-9zM485 370h39v4h-39zM567 370h30v4h-30zM481 374h39v4h-39zM563 374h38v4h-38zM481 378h43v4h-43zM563 378h38v4h-38zM481 382h43v5h-43zM563 382h38v5h-38zM481 387h43v4h-43zM563 387h38v4h-38zM481 391h43v4h-43zM563 391h38v4h-38zM481 395h43v5h-43zM563 395h38v5h-38zM477 400h38v4h-38zM567 400h38v4h-38zM464 404h43v4h-43zM575 404h39v4h-39zM464 408h39v5h-39zM580 408h38v5h-38zM464 413h39v4h-39zM580 413h38v4h-38zM464 417h39v4h-39zM580 417h38v4h-38zM464 421h39v4h-39zM580 421h38v4h-38zM464 425h39v5h-39zM580 425h38v5h-38zM464 430h39v4h-39zM580 430h38v4h-38zM455 434h43v4h-43zM588 434h26v4h-26zM653 434h8v4h-8zM447 438h38v5h-38zM597 438h8v5h-8zM644 438h30v5h-30zM442 443h43v4h-43zM640 443h38v4h-38zM442 447h43v4h-43zM640 447h38v4h-38zM442 451h43v4h-43zM640 451h34v4h-34zM442 455h43v5h-43zM640 455h34v5h-34zM442 460h43v4h-43zM640 460h34v4h-34zM442 464h43v4h-43zM640 464h34v4h-34zM451 468h43v5h-43zM644 468h39v5h-39zM464 473h39v4h-39zM653 473h38v4h-38zM464 477h39v4h-39zM657 477h39v4h-39zM464 481h39v4h-39zM657 481h39v4h-39zM464 485h39v5h-39zM657 485h39v5h-39zM464 490h43v4h-43zM657 490h39v4h-39zM464 494h43v4h-43zM657 494h39v4h-39zM464 498h43v5h-43zM657 498h39v5h-39zM455 503h43v4h-43zM666 503h21v4h-21zM726 503h17v4h-17zM447 507h38v4h-38zM674 507h4v4h-4zM717 507h34v4h-34zM447 511h38v4h-38zM713 511h38v4h-38zM447 515h38v5h-38zM713 515h38v5h-38zM447 520h38v4h-38zM713 520h38v4h-38zM447 524h38v4h-38zM713 524h38v4h-38zM447 528h38v5h-38zM713 528h38v5h-38zM447 533h38v4h-38zM713 533h38v4h-38zM434 537h43v4h-43zM721 537h22v4h-22zM425 541h39v5h-39zM425 546h39v4h-39zM425 550h39v4h-39zM425 554h39v4h-39zM425 558h39v5h-39zM425 563h39v4h-39zM425 567h39v4h-39zM730 567h4v4h-4zM412 571h43v5h-43zM721 571h22v5h-22zM404 576h43v4h-43zM713 576h38v4h-38zM404 580h43v4h-43zM713 580h38v4h-38zM404 584h43v4h-43zM713 584h38v4h-38zM404 588h43v5h-43zM713 588h38v5h-38zM404 593h43v4h-43zM713 593h38v4h-38zM404 597h43v4h-43zM713 597h38v4h-38zM404 601h43v5h-43zM708 601h43v5h-43zM417 606h43v4h-43zM700 606h38v4h-38zM425 610h39v4h-39zM696 610h38v4h-38zM425 614h39v4h-39zM696 614h38v4h-38zM425 618h39v5h-39zM696 618h38v5h-38zM425 623h39v4h-39zM696 623h38v4h-38zM425 627h39v4h-39zM696 627h38v4h-38zM425 631h39v5h-39zM696 631h38v5h-38zM425 636h35v4h-35zM691 636h39v4h-39zM438 640h13v4h-13zM678 640h39v4h-39zM674 644h39v4h-39zM674 648h39v5h-39zM674 653h39v4h-39zM674 657h39v4h-39zM678 661h35v5h-35zM678 666h35v4h-35zM683 670h25v4h-25zM691 674h9v4h-9zM593 739h12v4h-12zM584 743h34v4h-34zM580 747h38v4h-38zM580 751h38v5h-38zM580 756h38v4h-38zM580 760h38v4h-38zM580 764h38v5h-38zM580 769h38v4h-38zM588 773h26v4h-26zM597 777h4v4h-4z"/>
<path fill="#626262" d="M554 331h13v4h-13zM545 335h30v5h-30zM541 340h39v4h-39zM541 344h39v4h-39zM541 348h39v4h-39zM541 352h39v5h-39zM541 357h39v4h-39zM541 361h39v4h-39zM545 365h30v5h-30zM558 370h9v4h-9zM636 400h8v4h-8zM623 404h30v4h-30zM618 408h39v5h-39zM618 413h39v4h-39zM618 417h39v4h-39zM618 421h39v4h-39zM618 425h39v5h-39zM618 430h39v4h-39zM623 434h30v4h-30zM636 438h8v5h-8zM434 468h17v5h-17zM708 468h13v5h-13zM425 473h39v4h-39zM700 473h30v4h-30zM425 477h39v4h-39zM696 477h38v4h-38zM425 481h39v4h-39zM696 481h38v4h-38zM425 485h39v5h-39zM696 485h38v5h-38zM425 490h39v4h-39zM696 490h38v4h-38zM425 494h39v4h-39zM696 494h38v4h-38zM425 498h39v5h-39zM696 498h38v5h-38zM412 503h43v4h-43zM704 503h22v4h-22zM404 507h43v4h-43zM713 507h4v4h-4zM404 511h43v4h-43zM404 515h43v5h-43zM404 520h43v4h-43zM404 524h43v4h-43zM404 528h43v5h-43zM404 533h43v4h-43zM391 537h43v4h-43zM781 537h22v4h-22zM382 541h43v5h-43zM773 541h38v5h-38zM382 546h43v4h-43zM773 546h38v4h-38zM382 550h43v4h-43zM773 550h38v4h-38zM382 554h43v4h-43zM773 554h38v4h-38zM382 558h43v5h-43zM773 558h38v5h-38zM382 563h43v4h-43zM773 563h38v4h-38zM387 567h38v4h-38zM768 567h43v4h-43zM395 571h17v5h-17zM760 571h39v5h-39zM751 576h39v4h-39zM751 580h39v4h-39zM751 584h39v4h-39zM751 588h39v5h-39zM751 593h39v4h-39zM751 597h39v4h-39zM751 601h39v5h-39zM738 606h39v4h-39zM734 610h39v4h-39zM734 614h39v4h-39zM734 618h39v5h-39zM734 623h39v4h-39zM734 627h39v4h-39zM734 631h39v5h-39zM738 636h30v4h-30zM747 640h13v4h-13zM670 670h13v4h-13zM661 674h30v4h-30zM657 678h39v5h-39zM657 683h39v4h-39zM657 687h39v4h-39zM657 691h39v5h-39zM657 696h39v4h-39zM657 700h39v4h-39zM653 704h38v5h-38zM640 709h38v4h-38zM640 713h38v4h-38zM640 717h38v4h-38zM640 721h38v5h-38zM640 726h38v4h-38zM640 730h38v4h-38zM640 734h38v5h-38zM631 739h39v4h-39zM623 743h38v4h-38zM618 747h39v4h-39zM618 751h39v5h-39zM618 756h39v4h-39zM618 760h39v4h-39zM618 764h39v5h-39zM618 769h39v4h-39zM627 773h26v4h-26zM636 777h4v4h-4z"/>
<path fill="#737373" d="M614 365h9v5h-9zM605 370h26v4h-26zM601 374h39v4h-39zM601 378h39v4h-39zM601 382h39v5h-39zM601 387h39v4h-39zM601 391h39v4h-39zM601 395h39v5h-39zM605 400h31v4h-31zM614 404h9v4h-9zM691 434h9v4h-9zM678 438h35v5h-35zM678 443h35v4h-35zM678 447h35v4h-35zM674 451h39v4h-39zM674 455h39v5h-39zM674 460h39v4h-39zM674 464h39v4h-39zM683 468h25v5h-25zM747 468h13v5h-13zM691 473h9v4h-9zM734 473h34v4h-34zM734 477h39v4h-39zM734 481h39v4h-39zM734 485h39v5h-39zM734 490h39v4h-39zM734 494h39v4h-39zM734 498h39v5h-39zM743 503h38v4h-38zM751 507h39v4h-39zM751 511h39v4h-39zM751 515h39v5h-39zM751 520h39v4h-39zM751 524h39v4h-39zM751 528h39v5h-39zM751 533h39v4h-39zM760 537h21v4h-21zM820 537h21v4h-21zM811 541h39v5h-39zM811 546h39v4h-39zM811 550h39v4h-39zM811 554h39v4h-39zM811 558h39v5h-39zM811 563h39v4h-39zM811 567h39v4h-39zM824 571h17v5h-17zM730 636h8v4h-8zM717 640h30v4h-30zM713 644h38v4h-38zM713 648h38v5h-38zM713 653h38v4h-38zM713 657h38v4h-38zM713 661h38v5h-38zM713 666h38v4h-38zM708 670h39v4h-39zM700 674h38v4h-38zM696 678h38v5h-38zM696 683h38v4h-38zM696 687h38v4h-38zM696 691h38v5h-38zM696 696h38v4h-38zM696 700h38v4h-38zM691 704h39v5h-39zM678 709h39v4h-39zM678 713h39v4h-39zM678 717h39v4h-39zM678 721h39v5h-39zM678 726h39v4h-39zM678 730h39v4h-39zM678 734h39v5h-39zM683 739h25v4h-25zM696 743h4v4h-4z"/>
<path fill="#838383" d="M593 331h12v4h-12zM584 335h30v5h-30zM580 340h38v4h-38zM580 344h38v4h-38zM580 348h38v4h-38zM580 352h38v5h-38zM580 357h38v4h-38zM580 361h38v4h-38zM584 365h30v5h-30zM653 365h8v5h-8zM597 370h8v4h-8zM644 370h26v4h-26zM640 374h38v4h-38zM640 378h38v4h-38zM640 382h38v5h-38zM640 387h38v4h-38zM640 391h38v4h-38zM640 395h38v5h-38zM644 400h39v4h-39zM653 404h38v4h-38zM657 408h39v5h-39zM657 413h39v4h-39zM657 417h39v4h-39zM657 421h39v4h-39zM657 425h39v5h-39zM657 430h39v4h-39zM661 434h30v4h-30zM730 434h8v4h-8zM674 438h4v5h-4zM717 438h34v5h-34zM713 443h38v4h-38zM713 447h38v4h-38zM713 451h38v4h-38zM713 455h38v5h-38zM713 460h38v4h-38zM713 464h38v4h-38zM721 468h26v5h-26zM730 473h4v4h-4zM803 503h17v4h-17zM794 507h39v4h-39zM790 511h43v4h-43zM790 515h43v5h-43zM790 520h43v4h-43zM790 524h43v4h-43zM790 528h43v5h-43zM790 533h43v4h-43zM803 537h17v4h-17zM799 571h25v5h-25zM790 576h43v4h-43zM790 580h43v4h-43zM790 584h43v4h-43zM790 588h43v5h-43zM790 593h43v4h-43zM790 597h43v4h-43zM790 601h39v5h-39zM777 606h43v4h-43zM773 610h38v4h-38zM773 614h38v4h-38zM773 618h38v5h-38zM773 623h38v4h-38zM773 627h38v4h-38zM773 631h38v5h-38zM768 636h39v4h-39zM760 640h39v4h-39zM751 644h43v4h-43zM751 648h43v5h-43zM751 653h43v4h-43zM751 657h43v4h-43zM751 661h43v5h-43zM751 666h43v4h-43zM760 670h30v4h-30zM768 674h9v4h-9zM670 739h13v4h-13zM661 743h35v4h-35zM657 747h39v4h-39zM657 751h39v5h-39zM657 756h39v4h-39zM657 760h39v4h-39zM657 764h39v5h-39zM657 769h39v4h-39zM666 773h25v4h-25zM674 777h4v4h-4z"/>
<path fill="#949494" d="M636 331h8v4h-8zM623 335h30v5h-30zM618 340h39v4h-39zM618 344h39v4h-39zM618 348h39v4h-39zM618 352h39v5h-39zM618 357h39v4h-39zM618 361h39v4h-39zM623 365h30v5h-30zM631 370h13v4h-13zM708 400h13v4h-13zM700 404h30v4h-30zM696 408h38v5h-38zM696 413h38v4h-38zM696 417h38v4h-38zM696 421h38v4h-38zM696 425h38v5h-38zM696 430h38v4h-38zM700 434h30v4h-30zM713 438h4v5h-4zM786 468h13v5h-13zM773 473h38v4h-38zM773 477h38v4h-38zM773 481h38v4h-38zM773 485h38v5h-38zM773 490h38v4h-38zM773 494h38v4h-38zM773 498h38v5h-38zM781 503h22v4h-22zM790 507h4v4h-4zM863 537h21v4h-21zM850 541h43v5h-43zM850 546h43v4h-43zM850 550h43v4h-43zM850 554h43v4h-43zM850 558h43v5h-43zM850 563h43v4h-43zM850 567h43v4h-43zM841 571h39v5h-39zM833 576h38v4h-38zM833 580h38v4h-38zM833 584h38v4h-38zM833 588h38v5h-38zM833 593h38v4h-38zM833 597h38v4h-38zM829 601h42v5h-42zM820 606h39v4h-39zM811 610h43v4h-43zM811 614h43v4h-43zM811 618h43v5h-43zM811 623h43v4h-43zM811 627h43v4h-43zM811 631h43v5h-43zM816 636h34v4h-34zM824 640h13v4h-13zM747 670h13v4h-13zM738 674h30v4h-30zM734 678h39v5h-39zM734 683h39v4h-39zM734 687h39v4h-39zM734 691h39v5h-39zM734 696h39v4h-39zM734 700h39v4h-39zM730 704h38v5h-38zM717 709h43v4h-43zM717 713h39v4h-39zM717 717h39v4h-39zM717 721h39v5h-39zM717 726h39v4h-39zM717 730h39v4h-39zM717 734h39v5h-39zM708 739h39v4h-39zM700 743h38v4h-38zM696 747h38v4h-38zM696 751h38v5h-38zM696 756h38v4h-38zM696 760h38v4h-38zM696 764h38v5h-38zM696 769h38v4h-38zM704 773h26v4h-26zM713 777h8v4h-8z"/>
<path fill="#a4a4a4" d="M674 331h9v4h-9zM661 335h30v5h-30zM657 340h39v4h-39zM657 344h39v4h-39zM657 348h39v4h-39zM657 352h39v5h-39zM657 357h39v4h-39zM657 361h39v4h-39zM661 365h39v5h-39zM670 370h43v4h-43zM678 374h39v4h-39zM678 378h39v4h-39zM678 382h39v5h-39zM678 387h39v4h-39zM678 391h39v4h-39zM678 395h39v5h-39zM683 400h25v4h-25zM747 400h13v4h-13zM691 404h9v4h-9zM738 404h30v4h-30zM734 408h39v5h-39zM734 413h39v4h-39zM734 417h39v4h-39zM734 421h39v4h-39zM734 425h39v5h-39zM734 430h39v4h-39zM738 434h43v4h-43zM751 438h39v5h-39zM751 443h43v4h-43zM751 447h43v4h-43zM751 451h43v4h-43zM751 455h43v5h-43zM751 460h43v4h-43zM751 464h43v4h-43zM760 468h26v5h-26zM824 468h17v5h-17zM768 473h5v4h-5zM816 473h34v4h-34zM811 477h43v4h-43zM811 481h43v4h-43zM811 485h43v5h-43zM811 490h43v4h-43zM811 494h43v4h-43zM811 498h43v5h-43zM820 503h43v4h-43zM833 507h38v4h-38zM833 511h38v4h-38zM833 515h38v5h-38zM833 520h38v4h-38zM833 524h38v4h-38zM833 528h38v5h-38zM833 533h38v4h-38zM841 537h22v4h-22zM807 636h9v4h-9zM799 640h25v4h-25zM794 644h39v4h-39zM794 648h39v5h-39zM794 653h39v4h-39zM794 657h39v4h-39zM794 661h39v5h-39zM794 666h39v4h-39zM790 670h39v4h-39zM777 674h43v4h-43zM773 678h38v5h-38zM773 683h38v4h-38zM773 687h38v4h-38zM773 691h43v5h-43zM773 696h43v4h-43zM773 700h43v4h-43zM768 704h39v5h-39zM760 709h39v4h-39zM756 713h38v4h-38zM756 717h38v4h-38zM756 721h38v5h-38zM756 726h38v4h-38zM756 730h38v4h-38zM756 734h38v5h-38zM760 739h30v4h-30zM773 743h4v4h-4z"/>
<path fill="#b4b4b4" d="M730 365h13v5h-13zM721 370h30v4h-30zM717 374h39v4h-39zM717 378h39v4h-39zM717 382h39v5h-39zM717 387h39v4h-39zM717 391h39v4h-39zM717 395h39v5h-39zM721 400h26v4h-26zM730 404h8v4h-8zM807 434h13v4h-13zM794 438h39v5h-39zM794 443h39v4h-39zM794 447h39v4h-39zM794 451h39v4h-39zM794 455h39v5h-39zM794 460h39v4h-39zM794 464h39v4h-39zM799 468h25v5h-25zM811 473h5v4h-5zM747 739h13v4h-13zM738 743h35v4h-35zM734 747h43v4h-43zM734 751h43v5h-43zM734 756h43v4h-43zM734 760h43v4h-43zM734 764h43v5h-43zM734 769h43v4h-43zM743 773h25v4h-25zM751 777h9v4h-9z"/>
<path fill="#c5c5c5" d="M713 331h8v4h-8zM700 335h30v5h-30zM696 340h38v4h-38zM696 344h38v4h-38zM696 348h38v4h-38zM696 352h38v5h-38zM696 357h38v4h-38zM696 361h38v4h-38zM700 365h30v5h-30zM713 370h8v4h-8zM786 400h17v4h-17zM777 404h34v4h-34zM773 408h43v5h-43zM773 413h43v4h-43zM773 417h43v4h-43zM773 421h38v4h-38zM773 425h38v5h-38zM773 430h38v4h-38zM781 434h26v4h-26zM790 438h4v5h-4z"/>
<path fill="#d5d5d5" d="M751 331h9v4h-9zM738 335h35v5h-35zM734 340h43v4h-43zM734 344h43v4h-43zM734 348h43v4h-43zM734 352h43v5h-43zM734 357h43v4h-43zM734 361h43v4h-43zM743 365h38v5h-38zM751 370h39v4h-39zM756 374h38v4h-38zM756 378h38v4h-38zM756 382h38v5h-38zM756 387h38v4h-38zM756 391h38v4h-38zM756 395h38v5h-38zM760 400h26v4h-26zM768 404h9v4h-9z"/>
</svg>
<!-- ================= VIEWPORT EXTRAS ================= -->
<!-- dark rect on right -->
<div class="a" style="left:1082px;top:664px;width:35px;height:90px;background:#111"></div>
<div class="a" style="left:1086px;top:660px;width:31px;height:98px;background:#151515"></div>
<div class="a" style="left:1086px;top:664px;width:31px;height:90px;background:#303030"></div>
<div class="a" style="left:1086px;top:669px;width:4px;height:8px;background:#252525"></div>
<!-- bottom strip: light part -->
<div class="a" style="left:221px;top:797px;width:431px;height:63px;background:#d0d4d4"></div>
<div class="a" style="left:221px;top:797px;width:431px;height:4px;background:#7a8282"></div>
<div class="a" style="left:221px;top:797px;width:13px;height:4px;background:#0c0c0c"></div>
<div class="a" style="left:221px;top:801px;width:4px;height:4px;background:#50585a"></div>
<div class="a" style="left:225px;top:801px;width:4px;height:4px;background:#a0a8a8"></div>
<div class="a" style="left:251px;top:814px;width:392px;height:13px;background:#c4c8c8"></div>
<div class="a" style="left:242px;top:831px;width:410px;height:4px;background:#b9aea3"></div>
<div class="a" style="left:242px;top:835px;width:410px;height:4px;background:#c8cccd"></div>
<div class="a" style="left:242px;top:839px;width:410px;height:9px;background:#d3d7d7"></div>
<div class="a" style="left:242px;top:848px;width:410px;height:4px;background:#c6cacb"></div>
<div class="a" style="left:242px;top:852px;width:410px;height:4px;background:#c6bbb0"></div>
<div class="a" style="left:242px;top:856px;width:410px;height:4px;background:#d0d4d4"></div>
<div class="a" style="left:643px;top:805px;width:9px;height:55px;background:#c8cccc"></div>
<div class="a" style="left:664px;top:797px;width:0;height:0"></div>
<!-- tan block at left -->
<div class="a" style="left:234px;top:809px;width:8px;height:5px;background:#b4b8b8"></div>
<div class="a" style="left:225px;top:814px;width:17px;height:25px;background:#c09c80"></div>
<div class="a" style="left:242px;top:814px;width:5px;height:25px;background:#bcc2c4"></div>
<div class="a" style="left:221px;top:822px;width:4px;height:26px;background:#c8c4c0"></div>
<div class="a" style="left:225px;top:839px;width:13px;height:21px;background:#c09c80"></div>
<div class="a" style="left:221px;top:848px;width:8px;height:12px;background:#c09c80"></div>
<div class="a" style="left:238px;top:852px;width:4px;height:4px;background:#c8a890"></div>
<div class="a" style="left:238px;top:839px;width:4px;height:13px;background:#c0c6c8"></div>
<!-- bottom strip: dark part -->
<div class="a" style="left:652px;top:797px;width:396px;height:4px;background:#101210"></div>
<svg style="left:0;top:0" width="1280" height="1024" viewBox="0 0 1280 1024" shape-rendering="crispEdges">
 <path d="M652 801H1052V805H1056V809H1061V814H1065V827H1069V848H1073V856H1078V860H652Z" fill="#303030"/>
 <path d="M1052 801h4v4h5v5h4v4h4v13h4v21h4v8h5v4h-5v-4h-4v-8h-4v-21h-4v-13h-4v-4h-5v-5h-4z" fill="#161616"/>
 <path d="M652 827h383v4h-383z" fill="#202020"/><path d="M652 831h383v4h-383z" fill="#806858"/>
 <path d="M652 852h383v4h-383z" fill="#705a46"/><path d="M652 856h383v4h-383z" fill="#1e1e1e"/>
 <path d="M652 801h8v26h-8z" fill="#2a2e2a"/><path d="M652 814h4v13h-4z" fill="#3a3e3a"/><path d="M656 814h4v13h-4z" fill="#1c201c"/>
 <path d="M652 835h8v17h-8z" fill="#382c2a"/><path d="M656 839h4v9h-4z" fill="#241a1a"/><path d="M652 831h8v4h-8zM652 852h8v4h-8z" fill="#5e504a"/>
 <!-- finger -->
 <path d="M1039 809h9v5h-9z" fill="#80604e"/><path d="M1035 814h4v13h-4z" fill="#705040"/>
 <path d="M1039 814h9v4h4v42h-13v-4h-4v-29h4z" fill="#b08062"/><path d="M1039 814h9v4h-9z" fill="#c09878"/>
 <path d="M1052 827h4v33h-4z" fill="#a07c58"/><path d="M1056 852h5v8h-5z" fill="#b07840"/><path d="M1035 839h4v13h-4z" fill="#484848"/>
</svg>
<div class="a" style="left:221px;top:860px;width:896px;height:1px;background:#c4c4c4"></div>
<!-- axis gizmo bottom-left -->
<div class="a" style="left:234px;top:800px;width:38px;height:1px;background:linear-gradient(90deg,#200000,#ff0000)"></div>
<div class="a" style="left:231px;top:805px;width:1px;height:35px;background:linear-gradient(180deg,#001000,#008000)"></div>
<svg style="left:228px;top:798px" width="60" height="62" viewBox="0 0 60 62" shape-rendering="crispEdges">
 <path d="M1 1h5v1h-5zM4 2h2v1h-2zM3 3h2v1h-2zM2 4h2v1h-2zM1 5h2v1h-2zM1 6h5v1h-5z" fill="#0000ff"/>
 <path d="M51 1h2v2h-2zM55 1h2v2h-2zM52 3h4v2h-4zM51 5h2v2h-2zM55 5h2v2h-2z" fill="#ff0000"/>
 <path d="M1 51h2v4h-2zM5 51h2v6h-2zM2 55h3v1h-3zM4 57h2v1h-2zM1 58h4v1h-4z" fill="#008800"/>
</svg>
<!-- red loop + axis -->
<div class="a" style="left:762px;top:406px;width:9px;height:2px;background:#dfe7e7"></div>
<div class="a" style="left:746px;top:405px;width:26px;height:1px;background:linear-gradient(90deg,#000,#c00000 55%,#ff0000)"></div>
<div class="a" style="left:746px;top:406px;width:1px;height:25px;background:linear-gradient(180deg,#000,#008000 55%,#00b000)"></div>
<svg style="left:0;top:0" width="1280" height="1024" viewBox="0 0 1280 1024">
 <path d="M739.100 406.500H751.200L754 408.500 757.500 410.500 760.500 412.200 763.700 413 768.700 418 769.500 420.700 769.800 427.800 768.100 430 767.600 433.300" fill="none" stroke="#f81820" stroke-width="1.100"/>
 <path d="M765.400 432.700L764.800 434.900 763.200 436.600H752.800L748.400 434.400 745.200 432.500H738.600L735.300 431.100 732.300 427.300V425.600L734.500 419.600 735.900 411.400 737 408.100 739.100 406.500" fill="none" stroke="#f81820" stroke-width="1.100"/>
</svg>
<!-- ================= MAIN BOTTOM BAR + LOG ================= -->
<div class="a" style="left:221px;top:860px;width:896px;height:1px;background:#d0d0d0"></div>
<div class="a" style="left:223px;top:862px;width:70px;height:21px;border:1px solid;border-color:#7e7e7e #dedede #dedede #7e7e7e;box-shadow:inset 1px 1px 0 #dedede,inset -1px -1px 0 #7e7e7e"></div>
<div class="a" style="left:296px;top:862px;width:64px;height:21px;border:1px solid;border-color:#7e7e7e #dedede #dedede #7e7e7e;box-shadow:inset 1px 1px 0 #dedede,inset -1px -1px 0 #7e7e7e"></div>
<div class="a" style="left:362px;top:862px;width:50px;height:21px;border:1px solid;border-color:#7e7e7e #dedede #dedede #7e7e7e"></div>
<div class="a" style="left:363px;top:864px;width:1px;height:14px;background:#f4f4f4"></div>
<div class="a" style="left:364px;top:864px;width:14px;height:14px;background:#404040"></div>
<div class="a" style="left:378px;top:864px;width:2px;height:14px;background:#e8e8e8"></div>
<div class="a" style="left:380px;top:864px;width:14px;height:14px;background:#808080"></div>
<div class="a" style="left:394px;top:864px;width:1px;height:14px;background:#f8f8f8"></div>
<div class="a" style="left:395px;top:864px;width:16px;height:14px;background:#f0f0f0"></div>
<span class="t" style="left:229.50px;top:868.24px;font-size:12px;line-height:14px;font-weight:bold;color:#000;transform:scaleX(1.0026)">Material...</span>
<span class="t" style="left:301.00px;top:868.24px;font-size:12px;line-height:14px;font-weight:bold;color:#000;transform:scaleX(0.9441)">Objects...</span>
<div class="a" style="left:219px;top:885px;width:898px;height:2px;background:#f8f8f8"></div>
<div class="a" style="left:221px;top:890px;width:896px;height:2px;background:#929292"></div>
<!-- log -->
<div class="a" style="left:221px;top:892px;width:11px;height:11px;background:linear-gradient(180deg,#f04848,#c81818);border:1px solid;border-color:#ff9a9a #7a0a0a #7a0a0a #ff9a9a"></div>
<svg style="left:222px;top:893px" width="9" height="9" viewBox="0 0 9 9"><path d="M0.500 0.500l5 5M7.500 0.500l-6.500 6.500" stroke="#000" stroke-width="1.300" stroke-dasharray="1.400 1.400"/><path d="M1.500 1.500l6.500 6.500M8 1.500l-6.500 6.500" stroke="#fff" stroke-width="1.800"/></svg>
<div class="a" style="left:223px;top:905px;width:2px;height:63px;background:linear-gradient(90deg,#dedede 0 50%,#8a8a8a 50% 100%)"></div>
<div class="a" style="left:227px;top:905px;width:2px;height:63px;background:linear-gradient(90deg,#dedede 0 50%,#8a8a8a 50% 100%)"></div>
<div class="a" style="left:234px;top:893px;width:883px;height:77px;background:#fff;border:1px solid;border-color:#6a6a6a #e4e4e4 #e4e4e4 #6a6a6a"></div>
<div class="a" style="left:243px;top:904px;width:11px;height:1px;background:repeating-linear-gradient(90deg,#555 0 1px,transparent 1px 2px)"></div>
<svg style="left:254px;top:895px" width="15" height="14" viewBox="0 0 15 14"><path d="M5 1.500h5l3.500 3.500v4l-3.500 3.500h-5l-3.500-3.500v-4z" fill="#c0c0c0" transform="translate(1,1)"/><path d="M4.500 0.500h5l4 4v4l-4 4h-5l-4-4v-4z" fill="#fff" stroke="#000090" stroke-width="1"/><rect x="6" y="2.500" width="2.200" height="1.500" fill="#0000ff"/><rect x="6" y="4.800" width="2.200" height="5.500" fill="#0000ff"/></svg>
<span class="t" style="left:275.00px;top:896.24px;font-size:12px;line-height:14px;font-weight:normal;color:#000;transform:scaleX(0.9799)">ZModeler is ready.</span>
<div class="a" style="left:0;top:974px;width:1280px;height:1px;background:#f8f8f8"></div>
<!-- ================= RIGHT PANEL ================= -->
<div class="a" style="left:1117px;top:69px;width:163px;height:1px;background:#fafafa"></div>
<div class="a" style="left:1117px;top:69px;width:2px;height:905px;background:#fafafa"></div>
<div class="a" style="left:1122px;top:72px;width:1px;height:901px;background:#8c8c8c"></div>
<div class="a" style="left:1125px;top:74px;width:138px;height:2px;background:linear-gradient(180deg,#dedede 0 50%,#8a8a8a 50% 100%)"></div>
<div class="a" style="left:1125px;top:78px;width:138px;height:2px;background:linear-gradient(180deg,#dedede 0 50%,#8a8a8a 50% 100%)"></div>
<div class="a" style="left:1266px;top:71px;width:12px;height:12px;background:linear-gradient(180deg,#f04848,#c81818);border:1px solid;border-color:#ff9a9a #7a0a0a #7a0a0a #ff9a9a"></div>
<svg style="left:1267.5px;top:72.5px" width="9" height="9" viewBox="0 0 9 9"><path d="M0.500 0.500l5 5M7.500 0.500l-6.500 6.500" stroke="#000" stroke-width="1.300" stroke-dasharray="1.400 1.400"/><path d="M1.500 1.500l6.500 6.500M8 1.500l-6.500 6.500" stroke="#fff" stroke-width="1.800"/></svg>
<!-- scrollbar -->
<div class="a" style="left:1266px;top:84px;width:1px;height:888px;background:#dcdcdc"></div>
<div class="a" style="left:1277px;top:84px;width:1px;height:888px;background:#868686"></div>
<div class="a" style="left:1266px;top:84px;width:12px;height:1px;background:#dcdcdc"></div>
<div class="a" style="left:1266px;top:94px;width:12px;height:1px;background:#868686"></div>
<div class="a" style="left:1266px;top:96px;width:12px;height:1px;background:#d4d4d4"></div>
<svg style="left:1268px;top:87px" width="8" height="4" viewBox="0 0 8 4" shape-rendering="crispEdges"><path d="M3 0h2v1h-2zM2 1h4v1h-4zM1 2h6v1h-6zM0 3h8v1h-8z" fill="#000"/></svg>
<div class="a" style="left:1266px;top:958px;width:12px;height:1px;background:#868686"></div>
<div class="a" style="left:1266px;top:959px;width:12px;height:1px;background:#d4d4d4"></div>
<div class="a" style="left:1266px;top:970px;width:12px;height:1px;background:#868686"></div>
<svg style="left:1268px;top:963px" width="8" height="4" viewBox="0 0 8 4" shape-rendering="crispEdges"><path d="M0 0h8v1h-8zM1 1h6v1h-6zM2 2h4v1h-4zM3 3h2v1h-2z" fill="#000"/></svg>
<div class="a" style="left:1269px;top:524px;width:6px;height:1px;background:#000;box-shadow:0 2px 0 #000,0 4px 0 #000,0 6px 0 #000"></div>
<!-- menu -->
<span class="t" style="left:1133.00px;top:89.24px;font-size:12px;line-height:14px;font-weight:normal;color:#000;transform:scaleX(0.9018)">Create...</span>
<div class="a" style="left:1128px;top:104px;width:132px;height:16px;background:linear-gradient(90deg,#b7c7da 0,#c9d7e6 40%,#dbe6f1 100%);border:1px solid;border-color:#aebccc #e4ecf4 #e4ecf4 #aebccc"></div>
<span class="t" style="left:1133.00px;top:106.24px;font-size:12px;line-height:14px;font-weight:normal;color:#5b6980;transform:scaleX(0.9596)">Display...</span>
<span class="t" style="left:1143.50px;top:123.24px;font-size:12px;line-height:14px;font-weight:normal;color:#000;transform:scaleX(0.9370)">Disable</span>
<span class="t" style="left:1143.50px;top:140.24px;font-size:12px;line-height:14px;font-weight:normal;color:#000;transform:scaleX(0.9233)">Enable</span>
<span class="t" style="left:1143.50px;top:157.24px;font-size:12px;line-height:14px;font-weight:normal;color:#000;transform:scaleX(0.9927)">Hide</span>
<div class="a" style="left:1138px;top:172px;width:106px;height:16px;background:linear-gradient(90deg,#b7c7da 0,#c9d7e6 40%,#dbe6f1 100%);border:1px solid;border-color:#aebccc #e4ecf4 #e4ecf4 #aebccc"></div>
<div class="a" style="left:1247px;top:173px;width:14px;height:14px;background:#a6a6a6;border:1px solid #bcbcbc"></div>
<span class="t" style="left:1143.50px;top:174.24px;font-size:12px;line-height:14px;font-weight:normal;color:#5b6980;transform:scaleX(0.9406)">Local Axes...</span>
<span class="t" style="left:1153.50px;top:191.24px;font-size:12px;line-height:14px;font-weight:normal;color:#000;transform:scaleX(0.9785)">Center to Object</span>
<div class="a" style="left:1150px;top:206px;width:60px;height:14px;overflow:hidden"><div class="a" style="left:-1150px;top:-206px"><span class="t" style="left:1153.50px;top:208.24px;font-size:12px;line-height:14px;font-weight:normal;color:#000;transform:scaleX(0.9281)">Copy</span></div></div>
<div class="a" style="left:1145px;top:221px;width:113px;height:16px;background:linear-gradient(90deg,#93add2 0,#a9c0e0 45%,#c2d5ec 100%);border:1px solid;border-color:#b6c8e2 #dce6f2 #dce6f2 #b6c8e2"></div>
<span class="t" style="left:1151.50px;top:223.24px;font-size:12px;line-height:14px;font-weight:bold;color:#000;transform:scaleX(0.9770)">Reset to Parent</span>
<span class="t" style="left:1153.50px;top:242.24px;font-size:12px;line-height:14px;font-weight:normal;color:#000;transform:scaleX(0.9603)">Reset to World</span>
<span class="t" style="left:1143.50px;top:259.24px;font-size:12px;line-height:14px;font-weight:normal;color:#000;transform:scaleX(0.9328)">Show</span>
<span class="t" style="left:1144.00px;top:276.24px;font-size:12px;line-height:14px;font-weight:normal;color:#000;transform:scaleX(0.9551)">[By Name]</span>
<span class="t" style="left:1133.50px;top:293.24px;font-size:12px;line-height:14px;font-weight:normal;color:#000;transform:scaleX(1.0348)">Modify...</span>
<span class="t" style="left:1133.00px;top:310.24px;font-size:12px;line-height:14px;font-weight:normal;color:#000;transform:scaleX(0.8996)">Select...</span>
<span class="t" style="left:1133.00px;top:327.24px;font-size:12px;line-height:14px;font-weight:normal;color:#000;transform:scaleX(0.9152)">Surface...</span>
<!-- ================= STATUS BAR ================= -->
<div class="a" style="left:2px;top:978px;width:1px;height:15px;background:#e8e8e8"></div>
<div class="a" style="left:889px;top:977px;width:36px;height:17px;background:#f0f0f0"></div>
<div class="a" style="left:929px;top:978px;width:103px;height:16px;background:#8a2206;border:solid #f6f6f6;border-width:0 1px 1px 0"></div>
<span class="t" style="left:934.00px;top:979.24px;font-size:12px;line-height:14px;font-weight:bold;color:#fff;transform:scaleX(0.8902)">SELECTED MODE</span>
<div class="a" style="left:1036px;top:977px;width:35px;height:17px;border:1px solid;border-color:#7a7a7a #ececec #ececec #7a7a7a"></div>
<span class="t" style="left:1040.50px;top:979.24px;font-size:12px;line-height:14px;font-weight:bold;color:#000;transform:scaleX(0.9516)">Auto</span>
<div class="a" style="left:1073px;top:977px;width:189px;height:17px;border:1px solid;border-color:#7a7a7a #b4b4b4 #ececec #7a7a7a"></div>
<span class="t" style="left:1077.00px;top:979.24px;font-size:12px;line-height:14px;font-weight:normal;color:#000;transform:scaleX(0.8837)">Cursor: 0.58627, 0.04448, 0.00000</span>
<!-- size grip -->
<div class="dot" style="left:1275px;top:980px"></div>
<div class="dot" style="left:1270px;top:985px"></div><div class="dot" style="left:1275px;top:985px"></div>
<div class="dot" style="left:1265px;top:990px"></div><div class="dot" style="left:1270px;top:990px"></div><div class="dot" style="left:1275px;top:990px"></div>
<!-- ================= TASKBAR ================= -->
<div class="a" style="left:0;top:994px;width:1280px;height:30px;background:linear-gradient(90deg,#070b10 0,#0b0f14 30%,#0e1318 60%,#11161c 100%)"></div>
<div class="a" style="left:0;top:994px;width:1280px;height:1px;background:#0a0c0f"></div>
<div class="a" style="left:0;top:995px;width:1280px;height:1px;background:linear-gradient(90deg,#2a323c,#3a4450 50%,#465260)"></div>
<div class="a" style="left:0;top:996px;width:1280px;height:5px;background:linear-gradient(180deg,rgba(60,74,90,.55),rgba(30,40,52,0))"></div>
<!-- start orb -->
<div class="a" style="left:8px;top:989px;width:38px;height:38px;border-radius:50%;background:radial-gradient(circle at 50% 105%,#2ff0ff 0,#0aa0d8 22%,#0a5a9a 45%,#0f4a82 60%,#3a78a8 80%,#9cc0da 100%);border:1px solid #1a3c5c;box-shadow:0 0 2px 1px rgba(120,170,210,.55)"></div>
<div class="a" style="left:11px;top:991px;width:32px;height:17px;border-radius:16px 16px 40% 40%/16px 16px 30% 30%;background:linear-gradient(180deg,rgba(255,255,255,.55),rgba(255,255,255,.12))"></div>
<svg style="left:14px;top:995px" width="26" height="24" viewBox="0 0 26 24">
 <path d="M5.200 1.800q4-2 7.300 0.400l-1.700 8.300q-3.600-2-7.400-.4z" fill="#f0501a"/>
 <path d="M14 2.800q3.800 2.300 8.400-.3l-1.800 8.500q-4.600 2.400-8.300-.1z" fill="#86c440"/>
 <path d="M3 11.800q4-1.800 7.400.5l-1.800 8.300q-3.400-2.200-7.400-.5z" fill="#2a9ae6"/>
 <path d="M11.800 13q3.800 2.400 8.400-.2l-1.800 8.400q-4.600 2.500-8.400.1z" fill="#fcc21c"/>
</svg>
<!-- explorer -->
<svg style="left:73px;top:1003px" width="17" height="15" viewBox="0 0 17 15"><path d="M0.500 13V1.500q0-1 1-1h5l1.200 1.500h8q.8 0 .8 1V13z" fill="#f2dc8c" stroke="#c8a84a" stroke-width=".8"/><rect x="2" y="1.200" width="5" height="1.300" fill="#5ac83a"/><rect x="4" y="1.200" width="4" height="1.300" fill="#fff" opacity=".8"/><path d="M2.500 14.500V7.500q0-1 1-1h9.500q1 0 1 1v7h-3.500v-4h-4.500v4z" fill="#48a8e4" stroke="#bfe2f8" stroke-width=".9"/></svg>
<!-- buttons -->
<div class="tb" style="left:106px;top:995px"></div>
<div class="tb" style="left:152px;top:995px"></div>
<div class="tb" style="left:198px;top:995px"></div>
<div class="tb" style="left:244px;top:995px"></div>
<div class="tb" style="left:290px;top:995px"></div>
<div class="tb" style="left:336px;top:995px"></div>
<div class="tb act" style="left:382px;top:995px"></div>
<!-- WMP -->
<div class="a" style="left:119px;top:1001px;width:16px;height:16px;background:#b4d8f4;border:1px solid #58a0e0"></div>
<svg style="left:120px;top:1002px" width="14" height="14" viewBox="0 0 14 14"><circle cx="7" cy="7" r="5.800" fill="#f88a10"/><path d="M5 3.600v6.800l5.500-3.400z" fill="#fff"/></svg>
<!-- Firefox -->
<svg style="left:164px;top:1000px" width="18" height="18" viewBox="0 0 18 18"><circle cx="9.500" cy="8" r="5.500" fill="#2a5ec0"/><circle cx="10.500" cy="6.500" r="2.500" fill="#6aa0ee"/><path d="M2 4.500q1.500-3 3-3.500 0 1.500.8 2.300 3-1.300 5 .2-3 .5-3.200 2.500 1.500 1 3 .8-1 3-4 2.500 2 2.500 5.500 1.500 3-1.500 2.800-6 2 5-1.500 9-4.500 3.500-9.500.8-4-3.500-1.900-10.100z" fill="#e8701a"/><path d="M2 4.500q1.500-3 3-3.500 0 1.500.8 2.300-2 1-2.300 3.200z" fill="#f6a02a"/></svg>
<!-- Skype -->
<svg style="left:209px;top:1000px" width="20" height="18" viewBox="0 0 20 18"><circle cx="6" cy="5.500" r="4.500" fill="#1cb4f0"/><circle cx="10.500" cy="8.500" r="7" fill="#12a5e8"/><circle cx="14.500" cy="12.500" r="4.500" fill="#1cb4f0"/><path d="M13.200 5.800q-1-1.600-3.200-1.500-2.800.3-2.700 2.300.1 1.600 3 2.200 2 .5 1.600 1.600-.5 1-2 .8-1.400-.3-1.800-1.600" fill="none" stroke="#fff" stroke-width="1.900" stroke-linecap="round"/></svg>
<!-- robot -->
<svg style="left:258px;top:1001px" width="15" height="17" viewBox="0 0 15 17" shape-rendering="crispEdges">
 <path d="M3 14h11v2h-10zM12 8h2v6h-2z" fill="#e8e8e8" opacity=".8"/>
 <rect x="7" y="0" width="1" height="2" fill="#b0a000"/>
 <rect x="4.500" y="2.500" width="6" height="6" fill="#f8ec18" stroke="#8a7a00"/><rect x="6.500" y="4.500" width="2" height="2" fill="#60d030" stroke="#8a7a00" stroke-width=".8"/>
 <rect x="6.500" y="8" width="2" height="6" fill="#70e040" stroke="#3a8a10" stroke-width=".7"/>
 <path d="M1.500 9.500h4v4h-1v2.500h-2v-2.500h-1z" fill="#f8ec18" stroke="#8a7a00" stroke-width=".9"/><rect x="3" y="11" width="1" height="1" fill="#8a7a00"/>
 <path d="M9.500 9.500h4v4h-2v2.500h-2z" fill="#f8ec18" stroke="#8a7a00" stroke-width=".9"/><rect x="11" y="11" width="1" height="1" fill="#8a7a00"/>
</svg>
<!-- paint -->
<svg style="left:302px;top:1000px" width="20" height="18" viewBox="0 0 20 18"><path d="M8.500 3.500q-7 .5-7.500 7 .5 5.500 5.500 5.500 2.800-.2 2.600-2-.4-1.800 1.600-2.100 3.300-.4 3.600-4.200Q13.800 3.500 8.500 3.500z" fill="#eef4fa" stroke="#6aa8d8" stroke-width=".9"/><circle cx="4.200" cy="9.300" r="1.500" fill="#e8402a"/><circle cx="5.800" cy="6" r="1.400" fill="#48b848"/><circle cx="9.700" cy="5.500" r="1.500" fill="#f8a818"/><circle cx="9.700" cy="9.600" r="1.400" fill="#3a78c8"/><path d="M13.600 6.200h2.200l-.2 8.800q-.9 1.600-1.800 0z" fill="#f88a1a"/><path d="M12.600 1.800q2.100-1.500 4.200 0l-1.100 4.400h-2z" fill="#d8b080"/></svg>
<!-- N -->
<div class="a" style="left:350px;top:1002px;width:14px;height:14px;background:linear-gradient(135deg,#f4f4f4,#b8b8b8);border:1px solid;border-color:#e8c860 #c8c8c8 #e0a820 #e8c860"></div>
<span class="t" style="left:352.5px;top:1001px;font-size:12px;line-height:14px;font-weight:bold;font-style:italic;color:#111;transform:scaleX(1.05)">N</span>
<!-- Z -->
<div class="a" style="left:395px;top:1001px;width:16px;height:16px;background:#f59a0a"></div>
<svg style="left:395px;top:1001px" width="16" height="16" viewBox="0 0 16 16"><path d="M3.500 4h9.500l-6.500 7.500h7v2.300h-11l6.500-7.500h-5.500z" fill="#7a4a10" opacity=".6"/><path d="M2.500 3h10l-6.500 7.500h7v2.300h-11l6.500-7.500h-6z" fill="#4a1f9a"/></svg>
<!-- tray -->
<span class="t" style="left:1018.00px;top:1000.59px;font-size:11px;line-height:13px;font-weight:normal;color:#f0f0f0;transform:scaleX(0.9757)">RU</span>
<svg style="left:1050px;top:1008px" width="8" height="5" viewBox="0 0 8 5"><path d="M0 4.500h7.600L3.800 0z" fill="#f4f4f4"/></svg>
<svg style="left:1070px;top:1002px" width="17" height="17" viewBox="0 0 17 17"><circle cx="5.500" cy="5.500" r="4.500" fill="#8ad030"/><circle cx="8.500" cy="8.500" r="6.500" fill="#72c020"/><circle cx="11.500" cy="11.500" r="4.500" fill="#8ad030"/><path d="M5 8.500l2.500 2.800 4.500-5.300" fill="none" stroke="#fff" stroke-width="2.200"/></svg>
<svg style="left:1093px;top:1002px" width="17" height="17" viewBox="0 0 17 17"><g fill="#4cb81c"><circle cx="8.500" cy="3" r="3"/><circle cx="13.500" cy="5.500" r="3"/><circle cx="13.500" cy="11" r="3"/><circle cx="8.500" cy="14" r="3"/><circle cx="3.500" cy="11" r="3"/><circle cx="3.500" cy="5.500" r="3"/></g><path d="M4 6h9v4l-4.500 4.500-4.500-4.500z" fill="#f8e418"/><path d="M6 8h1M10 8h1M6.500 10.500q2 1.500 4 0" stroke="#4a3a00" fill="none" stroke-width=".9"/></svg>
<svg style="left:1117px;top:1002px" width="17" height="17" viewBox="0 0 17 17"><g fill="#4cb81c"><circle cx="8.500" cy="3" r="3"/><circle cx="13.500" cy="5.500" r="3"/><circle cx="13.500" cy="11" r="3"/><circle cx="8.500" cy="14" r="3"/><circle cx="3.500" cy="11" r="3"/><circle cx="3.500" cy="5.500" r="3"/></g><path d="M4 6h9v4l-4.500 4.500-4.500-4.500z" fill="#f8e418"/><path d="M6 8h1M10 8h1M6.500 10.500q2 1.500 4 0" stroke="#4a3a00" fill="none" stroke-width=".9"/></svg>
<svg style="left:1142px;top:1002px" width="17" height="17" viewBox="0 0 17 17"><rect x="5.500" y="4.500" width="10" height="8" fill="#1a1e24" stroke="#f4f4f4" stroke-width="1.400"/><path d="M8 15.500h6M11 12.500v3" stroke="#f4f4f4" stroke-width="1.400"/><path d="M2 1v4M4.500 1v4M1 5h4.500v3.500h-4.500zM3.300 8.500v7" stroke="#f4f4f4" fill="#1a1e24" stroke-width="1.200"/></svg>
<svg style="left:1166px;top:1002px" width="17" height="17" viewBox="0 0 17 17"><path d="M1 6h2.500l4-4v13l-4-4h-2.500z" fill="#f4f4f4"/><path d="M9.500 6q1.500 2.500 0 5M11.500 4q3 4.500 0 9M13.500 2.500q4 6 0 12" fill="none" stroke="#d8d8d8" stroke-width="1.100"/></svg>
<span class="t" style="left:1213.50px;top:1002.74px;font-size:12px;line-height:14px;font-weight:normal;color:#fff;transform:scaleX(0.9158)">17:07</span>
<div class="a" style="left:1266px;top:995px;width:13px;height:28px;border:1px solid #868c94;border-radius:1px;background:linear-gradient(180deg,rgba(255,255,255,.16) 0,rgba(255,255,255,.04) 30%,rgba(255,255,255,0) 50%),linear-gradient(140deg,#353a40 0,#2c3137 40%,#15181c 42%,#15181c 100%);box-shadow:-1px 0 0 #05070a"></div>
</body></html>
